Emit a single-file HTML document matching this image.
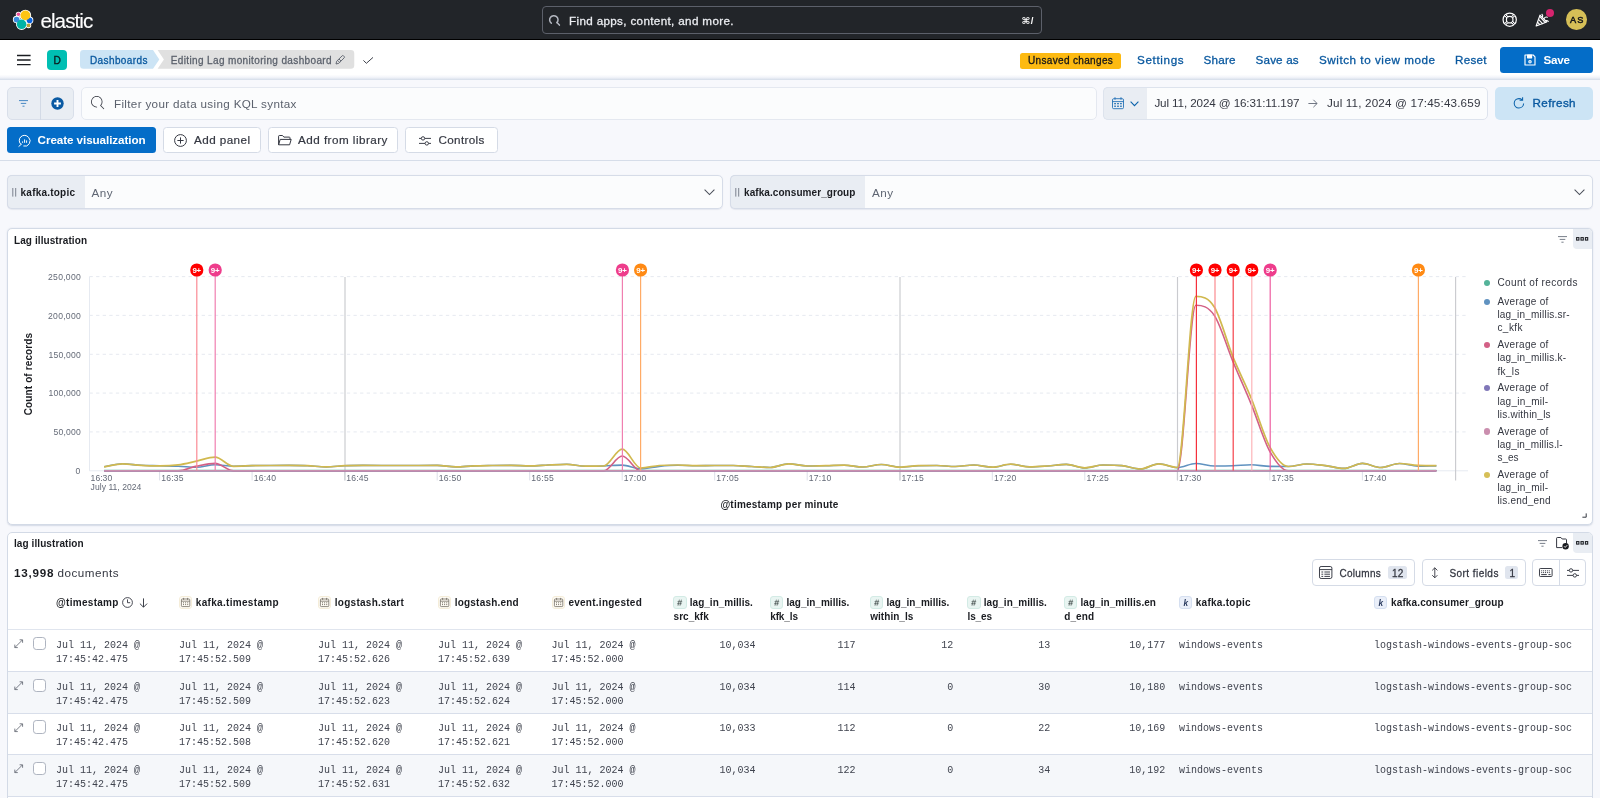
<!DOCTYPE html>
<html lang="en">
<head>
<meta charset="utf-8">
<title>Lag monitoring dashboard - Elastic</title>
<style>

html,body{margin:0;padding:0}
body{width:1600px;height:798px;overflow:hidden;position:relative;background:#f7f8fc;font-family:"Liberation Sans","DejaVu Sans",sans-serif;-webkit-font-smoothing:antialiased}
.t{position:absolute;white-space:nowrap;display:block}
#root{position:absolute;left:0;top:0;width:1600px;height:798px;overflow:hidden;will-change:transform}
.b{position:absolute;box-sizing:border-box}
svg{position:absolute;overflow:visible}

</style>
</head>
<body>
<div id="root">
<div class="b" style="left:0px;top:0px;width:1600px;height:39.9px;background:#000"></div>
<div class="b" style="left:0px;top:0px;width:1600px;height:38.9px;background:#222529"></div>
<svg style="left:0px;top:0px" width="40" height="40" viewBox="0 0 40 40" >
<g stroke="#fff" stroke-width="1.5" fill="#fff">
<circle cx="25.4" cy="15.4" r="5"/><circle cx="21.6" cy="24.3" r="4.9"/><circle cx="18.4" cy="14.3" r="1.9"/>
<circle cx="16.6" cy="19.6" r="3"/><circle cx="29.6" cy="20.3" r="3"/><circle cx="28.5" cy="25.4" r="2"/></g>
<circle cx="16.6" cy="19.6" r="2.9" fill="#3a8ddd"/>
<circle cx="29.6" cy="20.3" r="2.9" fill="#0b64dd"/>
<circle cx="28.5" cy="25.4" r="1.9" fill="#b9a23a"/>
<circle cx="18.4" cy="14.3" r="1.8" fill="#f04e98"/>
<circle cx="25.4" cy="15.4" r="4.9" fill="#fec514"/>
<circle cx="21.6" cy="24.3" r="4.8" fill="#00b3a7"/>
</svg>
<span class="t" style="left:40.4px;top:6.52px;font:400 20.6px/28.84px 'Liberation Sans','DejaVu Sans',sans-serif;color:#fff;letter-spacing:-0.913px;-webkit-text-stroke:0.12px #fff;">elastic</span>
<div class="b" style="left:541.6px;top:6.4px;width:500.2px;height:27.2px;border:1.2px solid #5c606a;border-radius:4px;background:#222529"></div>
<svg style="left:548px;top:13.6px" width="13" height="13" viewBox="0 0 13 13" ><g fill="none" stroke="#b4b8c1" stroke-width="1.5" stroke-linecap="round"><path d="M3.3 9.2A4.2 4.2 0 119 8.6"/><path d="M9 8.6l2.4 2.5"/></g></svg>
<span class="t" style="left:569px;top:12.83px;font:400 11.67px/16.34px 'Liberation Sans','DejaVu Sans',sans-serif;color:#eceef2;letter-spacing:0.344px;-webkit-text-stroke:0.26px #eceef2;">Find apps, content, and more.</span>
<span class="t" style="left:1021.5px;top:14.22px;font:700 9.5px/13.3px 'Liberation Sans','DejaVu Sans',sans-serif;color:#fff;letter-spacing:0.364px;">&#8984;/</span>
<svg style="left:1502.3px;top:12.2px" width="15.4" height="15.4" viewBox="0 0 16 16" ><g fill="none" stroke="#fff" stroke-width="1.25"><circle cx="8" cy="8" r="6.9"/><circle cx="8" cy="8" r="3.4"/>
<path d="M3.1 3.1l2.5 2.5M12.9 3.1l-2.5 2.5M3.1 12.9l2.5-2.5M12.9 12.9l-2.5-2.5" stroke-width="2.6"/></g>
<g fill="none" stroke="#20232a" stroke-width="0.9"><path d="M3.1 3.1l2.5 2.5M12.9 3.1l-2.5 2.5M3.1 12.9l2.5-2.5M12.9 12.9l-2.5-2.5"/></g></svg>
<svg style="left:1535.2px;top:12.2px" width="15.4" height="15.4" viewBox="0 0 16 16" ><g fill="none" stroke="#fff" stroke-width="1.2" stroke-linejoin="round" stroke-linecap="round">
<path d="M5.2 3.2L1.2 14.6l11-4.2z"/><path d="M3.6 7.6l4.2 4.4M2.6 10.6l2.2 2.4M4.8 4.6l5.4 6"/>
<path d="M7.2 2.4c.8.6 1 1.6.6 2.6M9.4 6.8c.8-1.4 2.2-1.8 3.4-1.4M11 9.2c1-.4 2-.2 2.8.6"/></g></svg>
<div class="b" style="left:1546.2px;top:9.4px;width:8.0px;height:8.0px;background:#d6246e;border-radius:50%"></div>
<div class="b" style="left:1566.3px;top:9.4px;width:20.7px;height:20.7px;background:#d6bf57;border-radius:50%"></div>
<span class="t" style="left:1570px;top:14.01px;font:400 9.2px/12.88px 'Liberation Sans','DejaVu Sans',sans-serif;color:#15161a;letter-spacing:1.134px;-webkit-text-stroke:0.5px #15161a;">AS</span>
<div class="b" style="left:0px;top:39.9px;width:1600px;height:39.7px;background:linear-gradient(#fff 0,#fff 34.6px,#f3f5fa 37.2px,#dfe5ef 39.1px,#d8dfea 39.7px)"></div>
<svg style="left:16.6px;top:54px" width="14" height="12" viewBox="0 0 14 12" ><path d="M0 1.4h13.6M0 6h13.6M0 10.6h13.6" stroke="#1a1c21" stroke-width="1.45" fill="none"/></svg>
<div class="b" style="left:47px;top:50px;width:19.6px;height:20px;background:#00bfb3;border-radius:4px"></div>
<span class="t" style="left:53.4px;top:53.57px;font:400 10.2px/14.28px 'Liberation Sans','DejaVu Sans',sans-serif;color:#0c1a1c;letter-spacing:0.000px;-webkit-text-stroke:0.30px #0c1a1c;">D</span>
<svg style="left:80px;top:50.4px" width="275" height="18.8" viewBox="0 0 275 18.8" ><path d="M3.5 0H73l6.3 9.4L73 18.8H3.5A3.5 3.5 0 010 15.3V3.5A3.5 3.5 0 013.5 0z" fill="#cce4f5"/>
<path d="M77.6 0H270.8a3.5 3.5 0 013.5 3.5V15.3a3.5 3.5 0 01-3.5 3.5H77.6l6.3-9.4z" fill="#e0e0e0"/></svg>
<span class="t" style="left:90px;top:53.6px;font:400 10px/14.0px 'Liberation Sans','DejaVu Sans',sans-serif;color:#09589f;letter-spacing:0.386px;-webkit-text-stroke:0.30px #09589f;">Dashboards</span>
<span class="t" style="left:170.8px;top:53.6px;font:400 10px/14.0px 'Liberation Sans','DejaVu Sans',sans-serif;color:#5a606b;letter-spacing:0.363px;-webkit-text-stroke:0.26px #5a606b;">Editing Lag monitoring dashboard</span>
<svg style="left:335px;top:55.2px" width="10" height="10" viewBox="0 0 10 10" ><g fill="none" stroke="#5a606b" stroke-width="0.9" stroke-linejoin="round"><path d="M1 9l.7-2.8L7.2.8a.9.9 0 011.3 0l.7.7a.9.9 0 010 1.3L3.8 8.3z"/><path d="M2.6 5.4l2 2M4 4l2 2"/></g></svg>
<svg style="left:363px;top:56.8px" width="11" height="7" viewBox="0 0 11 7" ><path d="M.4 3.4l3 2.9L10 .4" fill="none" stroke="#343741" stroke-width="0.95"/></svg>
<div class="b" style="left:1020px;top:52.8px;width:100.6px;height:16.1px;background:#fdba12;border-radius:2.5px"></div>
<span class="t" style="left:1028px;top:54.2px;font:400 10px/14.0px 'Liberation Sans','DejaVu Sans',sans-serif;color:#15161a;letter-spacing:0.338px;-webkit-text-stroke:0.30px #15161a;">Unsaved changes</span>
<span class="t" style="left:1137px;top:51.83px;font:400 11.67px/16.34px 'Liberation Sans','DejaVu Sans',sans-serif;color:#09589f;letter-spacing:0.639px;-webkit-text-stroke:0.30px #09589f;">Settings</span>
<span class="t" style="left:1203.4px;top:51.83px;font:400 11.67px/16.34px 'Liberation Sans','DejaVu Sans',sans-serif;color:#09589f;letter-spacing:0.273px;-webkit-text-stroke:0.30px #09589f;">Share</span>
<span class="t" style="left:1255.6px;top:51.83px;font:400 11.67px/16.34px 'Liberation Sans','DejaVu Sans',sans-serif;color:#09589f;letter-spacing:0.146px;-webkit-text-stroke:0.30px #09589f;">Save as</span>
<span class="t" style="left:1319px;top:51.83px;font:400 11.67px/16.34px 'Liberation Sans','DejaVu Sans',sans-serif;color:#09589f;letter-spacing:0.542px;-webkit-text-stroke:0.30px #09589f;">Switch to view mode</span>
<span class="t" style="left:1455px;top:51.83px;font:400 11.67px/16.34px 'Liberation Sans','DejaVu Sans',sans-serif;color:#09589f;letter-spacing:0.287px;-webkit-text-stroke:0.30px #09589f;">Reset</span>
<div class="b" style="left:1500px;top:46.9px;width:93.2px;height:26.0px;background:#046dc8;border-radius:3.5px"></div>
<svg style="left:1523.6px;top:54px" width="12" height="12" viewBox="0 0 12 12" ><g fill="none" stroke="#fff" stroke-width="1.15" stroke-linejoin="round"><path d="M1 1h8.2L11 2.8V11H1z"/><path d="M3.6 1v2.8h4V1z" fill="#fff"/><circle cx="6" cy="7.8" r="1.2"/></g></svg>
<span class="t" style="left:1543.4px;top:51.93px;font:700 11.67px/16.34px 'Liberation Sans','DejaVu Sans',sans-serif;color:#fff;letter-spacing:-0.211px;">Save</span>
<div class="b" style="left:7px;top:87px;width:66.6px;height:32.7px;background:#e9edf3;border:1px solid #d9dfea;border-radius:5px"></div>
<div class="b" style="left:39.8px;top:87px;width:1.0px;height:32.7px;background:#d3dae6"></div>
<svg style="left:18.6px;top:100px" width="9" height="7" viewBox="0 0 9 7" ><path d="M0 .6h9M1.8 3.4h5.4M3.5 6.2h2" stroke="#2b76bb" stroke-width="0.85" fill="none"/></svg>
<svg style="left:50.7px;top:96.5px" width="13" height="13" viewBox="0 0 13 13" ><circle cx="6.5" cy="6.5" r="6.2" fill="#0a5aa3"/><path d="M6.5 3.1v6.8M3.1 6.5h6.8" stroke="#fff" stroke-width="1.9" fill="none"/></svg>
<div class="b" style="left:81px;top:87px;width:1015.6px;height:32.7px;background:#fbfcfd;border:1px solid #e4e8f0;border-radius:5px"></div>
<svg style="left:90.6px;top:96.4px" width="13.2" height="13.2" viewBox="0 0 16 16" ><path fill="#343741" d="M11.271 11.978l3.872 3.873a.502.502 0 00.708 0 .502.502 0 000-.708l-3.565-3.564c2.38-2.747 2.267-6.923-.342-9.532-2.73-2.73-7.17-2.73-9.898 0-2.728 2.729-2.728 7.17 0 9.9a6.955 6.955 0 004.949 2.05.5.5 0 000-1 5.96 5.96 0 01-4.242-1.757 6.01 6.01 0 010-8.486 6.004 6.004 0 018.484 0 6.01 6.01 0 010 8.486.5.5 0 00.034.738z"/></svg>
<span class="t" style="left:114px;top:96.13px;font:400 11.67px/16.34px 'Liberation Sans','DejaVu Sans',sans-serif;color:#5b616d;letter-spacing:0.328px;">Filter your data using KQL syntax</span>
<div class="b" style="left:1103px;top:87px;width:385px;height:32.7px;background:#fbfcfd;border:1px solid #dde3ed;border-radius:5px"></div>
<div class="b" style="left:1103px;top:87px;width:44.4px;height:32.7px;background:#e9edf3;border:1px solid #dde3ed;border-right:none;border-radius:5px 0 0 5px"></div>
<svg style="left:1111.6px;top:96.6px" width="12" height="12.4" viewBox="0 0 12 12.4" ><g fill="none" stroke="#1a6bb3" stroke-width="0.85"><rect x=".5" y="1.7" width="11" height="10" rx="1.2"/><path d="M.5 4.6h11M3 .2v2.6M9 .2v2.6"/></g>
<g fill="#0a62ab"><rect x="2.3" y="6" width="1.5" height="1.3"/><rect x="5.25" y="6" width="1.5" height="1.3"/><rect x="8.2" y="6" width="1.5" height="1.3"/><rect x="2.3" y="8.6" width="1.5" height="1.3"/><rect x="5.25" y="8.6" width="1.5" height="1.3"/><rect x="8.2" y="8.6" width="1.5" height="1.3"/></g></svg>
<svg style="left:1130px;top:100.6px" width="9" height="5.5" viewBox="0 0 9 5.5" ><path d="M.6.7l3.9 3.9L8.4.7" fill="none" stroke="#0a62ab" stroke-width="1.1"/></svg>
<span class="t" style="left:1154.4px;top:95.33px;font:400 11.67px/16.34px 'Liberation Sans','DejaVu Sans',sans-serif;color:#343741;letter-spacing:-0.114px;">Jul 11, 2024 @ 16:31:11.197</span>
<svg style="left:1308.4px;top:98.8px" width="10" height="9" viewBox="0 0 10 9" ><path d="M.4 4.5h8.6M5.4.8l3.7 3.7-3.7 3.7" fill="none" stroke="#69707d" stroke-width="0.95"/></svg>
<span class="t" style="left:1327px;top:95.33px;font:400 11.67px/16.34px 'Liberation Sans','DejaVu Sans',sans-serif;color:#343741;letter-spacing:0.169px;">Jul 11, 2024 @ 17:45:43.659</span>
<div class="b" style="left:1495px;top:87px;width:98.2px;height:32.7px;background:#cce4f5;border-radius:5px"></div>
<svg style="left:1513.4px;top:97.4px" width="12" height="12" viewBox="0 0 12 12" ><g fill="none" stroke="#0a62ab" stroke-width="1.05"><path d="M10.6 6.4A4.7 4.7 0 115.9 1.6c1.3 0 2.4.5 3.3 1.3"/><path d="M9.6.2v3h-3"/></g></svg>
<span class="t" style="left:1532.6px;top:95.33px;font:400 11.67px/16.34px 'Liberation Sans','DejaVu Sans',sans-serif;color:#09589f;letter-spacing:0.362px;-webkit-text-stroke:0.36px #09589f;">Refresh</span>
<div class="b" style="left:7.4px;top:127.4px;width:148.4px;height:25.4px;background:#046dc8;border-radius:3.5px"></div>
<svg style="left:17.6px;top:133.6px" width="14" height="14" viewBox="0 0 14 14" ><g fill="none" stroke="#fff" stroke-width="1"><path d="M3.2 10.6A5.2 5.2 0 1110.6 3.4a5.2 5.2 0 01-5.2 8.6"/><path d="M.6 12.6l3-2.6"/><path d="M4.6 7.4v1.4M6.6 5.4v3.4M8.6 6.4v2.4"/></g></svg>
<span class="t" style="left:37.6px;top:131.93px;font:700 11.67px/16.34px 'Liberation Sans','DejaVu Sans',sans-serif;color:#fff;letter-spacing:-0.078px;">Create visualization</span>
<div class="b" style="left:163.4px;top:127.4px;width:97.4px;height:25.4px;background:#fff;border:1px solid #d5dbe6;border-radius:3.5px"></div>
<svg style="left:173.8px;top:133.9px" width="13" height="13" viewBox="0 0 13 13" ><g fill="none" stroke="#343741" stroke-width="1"><circle cx="6.5" cy="6.5" r="5.9"/><path d="M6.5 3.4v6.2M3.4 6.5h6.2"/></g></svg>
<span class="t" style="left:194px;top:131.93px;font:400 11.67px/16.34px 'Liberation Sans','DejaVu Sans',sans-serif;color:#343741;letter-spacing:0.438px;-webkit-text-stroke:0.20px #343741;">Add panel</span>
<div class="b" style="left:267.6px;top:127.4px;width:130.8px;height:25.4px;background:#fff;border:1px solid #d5dbe6;border-radius:3.5px"></div>
<svg style="left:277.6px;top:134.9px" width="14" height="11" viewBox="0 0 14 11" ><g fill="none" stroke="#343741" stroke-width="1" stroke-linejoin="round"><path d="M.6 9.8V1.2c0-.4.3-.7.7-.7h3.2l1.4 1.6h5.4c.4 0 .7.3.7.7v1.6"/><path d="M.6 9.8l1.6-5.4h11l-1.6 5.4z"/></g></svg>
<span class="t" style="left:298px;top:131.93px;font:400 11.67px/16.34px 'Liberation Sans','DejaVu Sans',sans-serif;color:#343741;letter-spacing:0.476px;-webkit-text-stroke:0.20px #343741;">Add from library</span>
<div class="b" style="left:405.4px;top:127.4px;width:92.6px;height:25.4px;background:#fff;border:1px solid #d5dbe6;border-radius:3.5px"></div>
<svg style="left:419px;top:135.5px" width="12" height="10" viewBox="0 0 12 10" ><g fill="none" stroke="#343741" stroke-width="0.95"><path d="M0 2.4h2.2M5.8 2.4H12M0 7.4h6M9.6 7.4H12"/><circle cx="4" cy="2.4" r="1.7"/><circle cx="7.8" cy="7.4" r="1.7"/></g></svg>
<span class="t" style="left:438.4px;top:131.93px;font:400 11.67px/16.34px 'Liberation Sans','DejaVu Sans',sans-serif;color:#343741;letter-spacing:0.371px;-webkit-text-stroke:0.20px #343741;">Controls</span>
<div class="b" style="left:0px;top:160px;width:1600px;height:1px;background:#d6dde9"></div>
<div class="b" style="left:7px;top:175px;width:716.2px;height:33.5px;background:#fbfcfd;border:1px solid #d6dce8;border-radius:5px;box-shadow:0 0.6px 1px rgba(160,172,196,0.2)"></div>
<div class="b" style="left:7px;top:175px;width:78px;height:33.5px;background:#e9edf3;border:1px solid #d6dce8;border-right:none;border-radius:5px 0 0 5px"></div>
<svg style="left:11.9px;top:188.2px" width="5" height="8.6" viewBox="0 0 5 8.6" ><path d="M.8 0v8.6M3.7 0v8.6" stroke="#5f6673" stroke-width="0.8"/></svg>
<span class="t" style="left:20.6px;top:186.2px;font:700 10px/14.0px 'Liberation Sans','DejaVu Sans',sans-serif;color:#1a1c21;letter-spacing:0.215px;">kafka.topic</span>
<span class="t" style="left:91.6px;top:185.13px;font:400 11.67px/16.34px 'Liberation Sans','DejaVu Sans',sans-serif;color:#5f6673;letter-spacing:0.453px;">Any</span>
<svg style="left:703.8000000000001px;top:189px" width="11" height="6.5" viewBox="0 0 11 6.5" ><path d="M.6.7l4.9 4.9L10.4.7" fill="none" stroke="#4a4f5b" stroke-width="1.05"/></svg>
<div class="b" style="left:730px;top:175px;width:863.2px;height:33.5px;background:#fbfcfd;border:1px solid #d6dce8;border-radius:5px;box-shadow:0 0.6px 1px rgba(160,172,196,0.2)"></div>
<div class="b" style="left:730px;top:175px;width:134.6px;height:33.5px;background:#e9edf3;border:1px solid #d6dce8;border-right:none;border-radius:5px 0 0 5px"></div>
<svg style="left:734.9px;top:188.2px" width="5" height="8.6" viewBox="0 0 5 8.6" ><path d="M.8 0v8.6M3.7 0v8.6" stroke="#5f6673" stroke-width="0.8"/></svg>
<span class="t" style="left:744px;top:186.2px;font:700 10px/14.0px 'Liberation Sans','DejaVu Sans',sans-serif;color:#1a1c21;letter-spacing:0.071px;">kafka.consumer_group</span>
<span class="t" style="left:872px;top:185.13px;font:400 11.67px/16.34px 'Liberation Sans','DejaVu Sans',sans-serif;color:#5f6673;letter-spacing:0.453px;">Any</span>
<svg style="left:1573.8px;top:189px" width="11" height="6.5" viewBox="0 0 11 6.5" ><path d="M.6.7l4.9 4.9L10.4.7" fill="none" stroke="#4a4f5b" stroke-width="1.05"/></svg>
<div class="b" style="left:7px;top:228.2px;width:1586.2px;height:296.4px;background:#fff;border:1px solid #d3dae6;border-radius:5px;box-shadow:0 0.8px 1.5px rgba(160,172,196,0.4)"></div>
<span class="t" style="left:14px;top:233.6px;font:700 10px/14.0px 'Liberation Sans','DejaVu Sans',sans-serif;color:#1a1c21;letter-spacing:0.089px;">Lag illustration</span>
<div class="b" style="left:1572.6px;top:229.2px;width:19.6px;height:20.0px;background:#e9edf3;border-radius:0 4px 0 4px"></div>
<svg style="left:1576.2px;top:237.4px" width="13" height="4" viewBox="0 0 13 4" ><g fill="none" stroke="#1a1c21" stroke-width="1.05"><rect x=".6" y=".6" width="2.3" height="2.5"/><rect x="5" y=".6" width="2.3" height="2.5"/><rect x="9.4" y=".6" width="2.3" height="2.5"/></g></svg>
<svg style="left:1557.8px;top:236.4px" width="9" height="7" viewBox="0 0 9 7" ><path d="M0 .6h9M1.7 3.4h5.6M3.4 6.2h2.2" stroke="#69707d" stroke-width="0.9" fill="none"/></svg>
<svg style="left:1581.6px;top:513.4px" width="5" height="5" viewBox="0 0 5 5" ><path d="M4.2.4v3.8H.4" fill="none" stroke="#343741" stroke-width="1"/></svg>
<svg style="left:0;top:0" width="1600" height="530" viewBox="0 0 1600 530"><path d="M89.5 431.9H1468" stroke="#e3e7ee" stroke-width="0.9" stroke-dasharray="3.3 3.3" fill="none"/><path d="M89.5 393.1H1468" stroke="#e3e7ee" stroke-width="0.9" stroke-dasharray="3.3 3.3" fill="none"/><path d="M89.5 354.3H1468" stroke="#e3e7ee" stroke-width="0.9" stroke-dasharray="3.3 3.3" fill="none"/><path d="M89.5 315.4H1468" stroke="#e3e7ee" stroke-width="0.9" stroke-dasharray="3.3 3.3" fill="none"/><path d="M89.5 276.6H1468" stroke="#e3e7ee" stroke-width="0.9" stroke-dasharray="3.3 3.3" fill="none"/><path d="M89.5 276.5V470.8H1468" stroke="#e6eaf1" stroke-width="1" fill="none"/><path d="M159.6 471V480.4" stroke="#d8dde6" stroke-width="0.9"/><path d="M252.1 471V480.4" stroke="#d8dde6" stroke-width="0.9"/><path d="M344.6 471V480.4" stroke="#d8dde6" stroke-width="0.9"/><path d="M437.2 471V480.4" stroke="#d8dde6" stroke-width="0.9"/><path d="M529.7 471V480.4" stroke="#d8dde6" stroke-width="0.9"/><path d="M622.2 471V480.4" stroke="#d8dde6" stroke-width="0.9"/><path d="M714.7 471V480.4" stroke="#d8dde6" stroke-width="0.9"/><path d="M807.2 471V480.4" stroke="#d8dde6" stroke-width="0.9"/><path d="M899.8 471V480.4" stroke="#d8dde6" stroke-width="0.9"/><path d="M992.3 471V480.4" stroke="#d8dde6" stroke-width="0.9"/><path d="M1084.8 471V480.4" stroke="#d8dde6" stroke-width="0.9"/><path d="M1177.3 471V480.4" stroke="#d8dde6" stroke-width="0.9"/><path d="M1269.8 471V480.4" stroke="#d8dde6" stroke-width="0.9"/><path d="M1362.4 471V480.4" stroke="#d8dde6" stroke-width="0.9"/><path d="M345 277V480.4" stroke="#cacbcf" stroke-width="1.15"/><path d="M900 277V480.4" stroke="#cacbcf" stroke-width="1.15"/><path d="M1177.5 277V480.4" stroke="#cacbcf" stroke-width="1.15"/><path d="M1455.6 277V480.4" stroke="#cacbcf" stroke-width="1.15"/><path d="M104.1 470.6C110.3 470.6 116.4 470.6 122.6 470.6C128.8 470.6 134.9 470.6 141.1 470.6C147.3 470.6 153.4 470.6 159.6 470.6C165.8 470.6 171.9 470.6 178.1 470.6C184.3 470.6 190.4 470.6 196.6 470.6C202.8 470.6 208.9 470.6 215.1 470.6C221.3 470.6 227.4 470.6 233.6 470.6C239.8 470.6 246.0 470.6 252.1 470.6C258.3 470.6 264.5 470.6 270.6 470.6C276.8 470.6 283.0 470.6 289.1 470.6C295.3 470.6 301.5 470.6 307.6 470.6C313.8 470.6 320.0 470.6 326.1 470.6C332.3 470.6 338.5 470.6 344.6 470.6C350.8 470.6 357.0 470.6 363.1 470.6C369.3 470.6 375.5 470.6 381.6 470.6C387.8 470.6 394.0 470.6 400.2 470.6C406.3 470.6 412.5 470.6 418.7 470.6C424.8 470.6 431.0 470.6 437.2 470.6C443.3 470.6 449.5 470.6 455.7 470.6C461.8 470.6 468.0 470.6 474.2 470.6C480.3 470.6 486.5 470.6 492.7 470.6C498.8 470.6 505.0 470.6 511.2 470.6C517.3 470.6 523.5 470.6 529.7 470.6C535.8 470.6 542.0 470.6 548.2 470.6C554.4 470.6 560.5 470.6 566.7 470.6C572.9 470.6 579.0 470.6 585.2 470.6C591.4 470.6 597.5 470.6 603.7 470.6C609.9 470.6 616.0 470.6 622.2 470.6C628.4 470.6 634.5 470.6 640.7 470.6C646.9 470.6 653.0 470.6 659.2 470.6C665.4 470.6 671.5 470.6 677.7 470.6C683.9 470.6 690.0 470.6 696.2 470.6C702.4 470.6 708.6 470.6 714.7 470.6C720.9 470.6 727.1 470.6 733.2 470.6C739.4 470.6 745.6 470.6 751.7 470.6C757.9 470.6 764.1 470.6 770.2 470.6C776.4 470.6 782.6 470.6 788.7 470.6C794.9 470.6 801.1 470.6 807.2 470.6C813.4 470.6 819.6 470.6 825.7 470.6C831.9 470.6 838.1 470.6 844.2 470.6C850.4 470.6 856.6 470.6 862.8 470.6C868.9 470.6 875.1 470.6 881.3 470.6C887.4 470.6 893.6 470.6 899.8 470.6C905.9 470.6 912.1 470.6 918.3 470.6C924.4 470.6 930.6 470.6 936.8 470.6C942.9 470.6 949.1 470.6 955.3 470.6C961.4 470.6 967.6 470.6 973.8 470.6C979.9 470.6 986.1 470.6 992.3 470.6C998.4 470.6 1004.6 470.6 1010.8 470.6C1017.0 470.6 1023.1 470.6 1029.3 470.6C1035.5 470.6 1041.6 470.6 1047.8 470.6C1054.0 470.6 1060.1 470.6 1066.3 470.6C1072.5 470.6 1078.6 470.6 1084.8 470.6C1091.0 470.6 1097.1 470.6 1103.3 470.6C1109.5 470.6 1115.6 470.6 1121.8 470.6C1128.0 470.6 1134.1 470.6 1140.3 470.6C1146.5 470.6 1152.6 470.6 1158.8 470.6C1165.0 470.6 1171.2 470.6 1177.3 470.6C1183.5 470.6 1189.7 470.6 1195.8 470.6C1202.0 470.6 1208.2 470.6 1214.3 470.6C1220.5 470.6 1226.7 470.6 1232.8 470.6C1239.0 470.6 1245.2 470.6 1251.3 470.6C1257.5 470.6 1263.7 470.6 1269.8 470.6C1276.0 470.6 1282.2 470.6 1288.3 470.6C1294.5 470.6 1300.7 470.6 1306.8 470.6C1313.0 470.6 1319.2 470.6 1325.4 470.6C1331.5 470.6 1337.7 470.6 1343.9 470.6C1350.0 470.6 1356.2 470.6 1362.4 470.6C1368.5 470.6 1374.7 470.6 1380.9 470.6C1387.0 470.6 1393.2 470.6 1399.4 470.6C1405.5 470.6 1411.7 470.6 1417.9 470.6C1424.0 470.6 1430.2 470.6 1436.4 470.6" fill="none" stroke="#54b399" stroke-width="1.6" stroke-linejoin="round"/><path d="M104.1 466.8C110.3 465.8 116.4 463.8 122.6 463.8C128.8 463.8 134.9 465.0 141.1 465.3C147.3 465.7 153.4 465.6 159.6 465.8C165.8 465.9 171.9 465.9 178.1 466.2C184.3 466.4 190.4 467.3 196.6 467.3C202.8 467.3 208.9 464.8 215.1 464.8C221.3 464.8 227.4 466.3 233.6 466.3C239.8 466.3 246.0 465.8 252.1 465.6C258.3 465.5 264.5 465.5 270.6 465.5C276.8 465.4 283.0 465.4 289.1 465.4C295.3 465.4 301.5 465.4 307.6 465.7C313.8 466.0 320.0 466.9 326.1 466.9C332.3 466.9 338.5 466.0 344.6 465.7C350.8 465.4 357.0 465.4 363.1 465.4C369.3 465.4 375.5 465.4 381.6 465.5C387.8 465.5 394.0 465.5 400.2 465.5C406.3 465.5 412.5 465.5 418.7 465.5C424.8 465.4 431.0 465.4 437.2 465.4C443.3 465.4 449.5 466.9 455.7 466.9C461.8 466.9 468.0 466.1 474.2 465.9C480.3 465.6 486.5 465.6 492.7 465.5C498.8 465.5 505.0 465.4 511.2 465.4C517.3 465.4 523.5 465.9 529.7 465.9C535.8 465.9 542.0 465.3 548.2 465.0C554.4 464.7 560.5 464.3 566.7 464.3C572.9 464.3 579.0 466.2 585.2 466.2C591.4 466.2 597.5 466.2 603.7 466.0C609.9 465.8 616.0 465.1 622.2 465.1C628.4 465.1 634.5 468.7 640.7 468.7C646.9 468.7 653.0 467.0 659.2 466.4C665.4 465.8 671.5 465.3 677.7 465.3C683.9 465.3 690.0 465.7 696.2 465.7C702.4 465.7 708.6 465.5 714.7 465.5C720.9 465.5 727.1 465.5 733.2 465.5C739.4 465.6 745.6 466.2 751.7 466.5C757.9 466.8 764.1 467.5 770.2 467.5C776.4 467.5 782.6 463.8 788.7 463.8C794.9 463.8 801.1 466.0 807.2 466.0C813.4 466.0 819.6 465.8 825.7 465.7C831.9 465.6 838.1 465.2 844.2 465.2C850.4 465.2 856.6 467.0 862.8 467.0C868.9 467.0 875.1 464.5 881.3 464.5C887.4 464.5 893.6 467.2 899.8 467.2C905.9 467.2 912.1 465.9 918.3 465.7C924.4 465.5 930.6 465.5 936.8 465.5C942.9 465.5 949.1 466.5 955.3 466.5C961.4 466.5 967.6 465.0 973.8 465.0C979.9 465.0 986.1 467.2 992.3 467.2C998.4 467.2 1004.6 464.2 1010.8 464.2C1017.0 464.2 1023.1 466.9 1029.3 466.9C1035.5 466.9 1041.6 466.4 1047.8 466.0C1054.0 465.6 1060.1 464.4 1066.3 464.4C1072.5 464.4 1078.6 467.9 1084.8 467.9C1091.0 467.9 1097.1 465.0 1103.3 465.0C1109.5 465.0 1115.6 465.0 1121.8 465.6C1128.0 466.2 1134.1 469.0 1140.3 469.0C1146.5 469.0 1152.6 463.8 1158.8 463.8C1165.0 463.8 1171.2 467.6 1177.3 467.6C1183.5 467.6 1189.7 463.5 1195.8 463.5C1202.0 463.5 1208.2 466.0 1214.3 466.0C1220.5 466.0 1226.7 466.0 1232.8 465.8C1239.0 465.6 1245.2 464.8 1251.3 464.8C1257.5 464.8 1263.7 466.3 1269.8 466.4C1276.0 466.5 1282.2 466.5 1288.3 466.5C1294.5 466.5 1300.7 464.0 1306.8 464.0C1313.0 464.0 1319.2 464.9 1325.4 465.6C1331.5 466.3 1337.7 468.4 1343.9 468.4C1350.0 468.4 1356.2 463.4 1362.4 463.4C1368.5 463.4 1374.7 467.5 1380.9 467.5C1387.0 467.5 1393.2 463.5 1399.4 463.5C1405.5 463.5 1411.7 466.2 1417.9 466.2C1424.0 466.2 1430.2 466.0 1436.4 465.9" fill="none" stroke="#6092c0" stroke-width="1.6" stroke-linejoin="round"/><path d="M104.1 470.8C110.3 470.8 116.4 470.8 122.6 470.8C128.8 470.8 134.9 470.8 141.1 470.8C147.3 470.8 153.4 470.8 159.6 470.8C165.8 470.8 171.9 470.8 178.1 470.8C184.3 470.8 190.4 467.3 196.6 466.1C202.8 464.9 208.9 463.4 215.1 463.4C221.3 463.4 227.4 470.8 233.6 470.8C239.8 470.8 246.0 470.8 252.1 470.8C258.3 470.8 264.5 470.8 270.6 470.8C276.8 470.8 283.0 470.8 289.1 470.8C295.3 470.8 301.5 470.8 307.6 470.8C313.8 470.8 320.0 470.8 326.1 470.8C332.3 470.8 338.5 470.8 344.6 470.8C350.8 470.8 357.0 470.8 363.1 470.8C369.3 470.8 375.5 470.8 381.6 470.8C387.8 470.8 394.0 470.8 400.2 470.8C406.3 470.8 412.5 470.8 418.7 470.8C424.8 470.8 431.0 470.8 437.2 470.8C443.3 470.8 449.5 470.8 455.7 470.8C461.8 470.8 468.0 470.8 474.2 470.8C480.3 470.8 486.5 470.8 492.7 470.8C498.8 470.8 505.0 470.8 511.2 470.8C517.3 470.8 523.5 470.8 529.7 470.8C535.8 470.8 542.0 470.8 548.2 470.8C554.4 470.8 560.5 470.8 566.7 470.8C572.9 470.8 579.0 470.8 585.2 470.8C591.4 470.8 597.5 470.8 603.7 470.8C609.9 470.8 616.0 456.0 622.2 456.0C628.4 456.0 634.5 470.8 640.7 470.8C646.9 470.8 653.0 470.8 659.2 470.8C665.4 470.8 671.5 470.8 677.7 470.8C683.9 470.8 690.0 470.8 696.2 470.8C702.4 470.8 708.6 470.8 714.7 470.8C720.9 470.8 727.1 470.8 733.2 470.8C739.4 470.8 745.6 470.8 751.7 470.8C757.9 470.8 764.1 470.8 770.2 470.8C776.4 470.8 782.6 470.8 788.7 470.8C794.9 470.8 801.1 470.8 807.2 470.8C813.4 470.8 819.6 470.8 825.7 470.8C831.9 470.8 838.1 470.8 844.2 470.8C850.4 470.8 856.6 470.8 862.8 470.8C868.9 470.8 875.1 470.8 881.3 470.8C887.4 470.8 893.6 470.8 899.8 470.8C905.9 470.8 912.1 470.8 918.3 470.8C924.4 470.8 930.6 470.8 936.8 470.8C942.9 470.8 949.1 470.8 955.3 470.8C961.4 470.8 967.6 470.8 973.8 470.8C979.9 470.8 986.1 470.8 992.3 470.8C998.4 470.8 1004.6 470.8 1010.8 470.8C1017.0 470.8 1023.1 470.8 1029.3 470.8C1035.5 470.8 1041.6 470.8 1047.8 470.8C1054.0 470.8 1060.1 470.8 1066.3 470.8C1072.5 470.8 1078.6 470.8 1084.8 470.8C1091.0 470.8 1097.1 470.8 1103.3 470.8C1109.5 470.8 1115.6 470.8 1121.8 470.8C1128.0 470.8 1134.1 470.8 1140.3 470.8C1146.5 470.8 1152.6 470.8 1158.8 470.8C1165.0 470.8 1171.2 470.8 1177.3 470.8C1183.5 470.8 1189.7 305.3 1195.8 305.3C1202.0 305.3 1208.2 306.1 1214.3 315.4C1220.5 324.7 1226.7 346.4 1232.8 361.2C1239.0 376.1 1245.2 389.3 1251.3 404.4C1257.5 419.4 1263.7 440.3 1269.8 451.3C1276.0 462.4 1282.2 470.8 1288.3 470.8C1294.5 470.8 1300.7 470.8 1306.8 470.8C1313.0 470.8 1319.2 470.8 1325.4 470.8C1331.5 470.8 1337.7 470.8 1343.9 470.8C1350.0 470.8 1356.2 470.8 1362.4 470.8C1368.5 470.8 1374.7 470.8 1380.9 470.8C1387.0 470.8 1393.2 470.8 1399.4 470.8C1405.5 470.8 1411.7 470.8 1417.9 470.8C1424.0 470.8 1430.2 470.8 1436.4 470.8" fill="none" stroke="#d36086" stroke-width="1.6" stroke-linejoin="round"/><path d="M104.1 470.7C110.3 470.7 116.4 470.7 122.6 470.7C128.8 470.7 134.9 470.7 141.1 470.7C147.3 470.7 153.4 470.7 159.6 470.7C165.8 470.7 171.9 470.7 178.1 470.7C184.3 470.7 190.4 470.7 196.6 470.7C202.8 470.7 208.9 470.7 215.1 470.7C221.3 470.7 227.4 470.7 233.6 470.7C239.8 470.7 246.0 470.7 252.1 470.7C258.3 470.7 264.5 470.7 270.6 470.7C276.8 470.7 283.0 470.7 289.1 470.7C295.3 470.7 301.5 470.7 307.6 470.7C313.8 470.7 320.0 470.7 326.1 470.7C332.3 470.7 338.5 470.7 344.6 470.7C350.8 470.7 357.0 470.7 363.1 470.7C369.3 470.7 375.5 470.7 381.6 470.7C387.8 470.7 394.0 470.7 400.2 470.7C406.3 470.7 412.5 470.7 418.7 470.7C424.8 470.7 431.0 470.7 437.2 470.7C443.3 470.7 449.5 470.7 455.7 470.7C461.8 470.7 468.0 470.7 474.2 470.7C480.3 470.7 486.5 470.7 492.7 470.7C498.8 470.7 505.0 470.7 511.2 470.7C517.3 470.7 523.5 470.7 529.7 470.7C535.8 470.7 542.0 470.7 548.2 470.7C554.4 470.7 560.5 470.7 566.7 470.7C572.9 470.7 579.0 470.7 585.2 470.7C591.4 470.7 597.5 470.7 603.7 470.7C609.9 470.7 616.0 470.7 622.2 470.7C628.4 470.7 634.5 470.7 640.7 470.7C646.9 470.7 653.0 470.7 659.2 470.7C665.4 470.7 671.5 470.7 677.7 470.7C683.9 470.7 690.0 470.7 696.2 470.7C702.4 470.7 708.6 470.7 714.7 470.7C720.9 470.7 727.1 470.7 733.2 470.7C739.4 470.7 745.6 470.7 751.7 470.7C757.9 470.7 764.1 470.7 770.2 470.7C776.4 470.7 782.6 470.7 788.7 470.7C794.9 470.7 801.1 470.7 807.2 470.7C813.4 470.7 819.6 470.7 825.7 470.7C831.9 470.7 838.1 470.7 844.2 470.7C850.4 470.7 856.6 470.7 862.8 470.7C868.9 470.7 875.1 470.7 881.3 470.7C887.4 470.7 893.6 470.7 899.8 470.7C905.9 470.7 912.1 470.7 918.3 470.7C924.4 470.7 930.6 470.7 936.8 470.7C942.9 470.7 949.1 470.7 955.3 470.7C961.4 470.7 967.6 470.7 973.8 470.7C979.9 470.7 986.1 470.7 992.3 470.7C998.4 470.7 1004.6 470.7 1010.8 470.7C1017.0 470.7 1023.1 470.7 1029.3 470.7C1035.5 470.7 1041.6 470.7 1047.8 470.7C1054.0 470.7 1060.1 470.7 1066.3 470.7C1072.5 470.7 1078.6 470.7 1084.8 470.7C1091.0 470.7 1097.1 470.7 1103.3 470.7C1109.5 470.7 1115.6 470.7 1121.8 470.7C1128.0 470.7 1134.1 470.7 1140.3 470.7C1146.5 470.7 1152.6 470.7 1158.8 470.7C1165.0 470.7 1171.2 470.7 1177.3 470.7C1183.5 470.7 1189.7 470.7 1195.8 470.7C1202.0 470.7 1208.2 470.7 1214.3 470.7C1220.5 470.7 1226.7 470.7 1232.8 470.7C1239.0 470.7 1245.2 470.7 1251.3 470.7C1257.5 470.7 1263.7 470.7 1269.8 470.7C1276.0 470.7 1282.2 470.7 1288.3 470.7C1294.5 470.7 1300.7 470.7 1306.8 470.7C1313.0 470.7 1319.2 470.7 1325.4 470.7C1331.5 470.7 1337.7 470.7 1343.9 470.7C1350.0 470.7 1356.2 470.7 1362.4 470.7C1368.5 470.7 1374.7 470.7 1380.9 470.7C1387.0 470.7 1393.2 470.7 1399.4 470.7C1405.5 470.7 1411.7 470.7 1417.9 470.7C1424.0 470.7 1430.2 470.7 1436.4 470.7" fill="none" stroke="#8077b8" stroke-width="1.6" stroke-linejoin="round"/><path d="M104.1 470.7C110.3 470.7 116.4 470.7 122.6 470.7C128.8 470.7 134.9 470.7 141.1 470.7C147.3 470.7 153.4 470.7 159.6 470.7C165.8 470.7 171.9 470.7 178.1 470.7C184.3 470.7 190.4 470.7 196.6 470.7C202.8 470.7 208.9 470.7 215.1 470.7C221.3 470.7 227.4 470.7 233.6 470.7C239.8 470.7 246.0 470.7 252.1 470.7C258.3 470.7 264.5 470.7 270.6 470.7C276.8 470.7 283.0 470.7 289.1 470.7C295.3 470.7 301.5 470.7 307.6 470.7C313.8 470.7 320.0 470.7 326.1 470.7C332.3 470.7 338.5 470.7 344.6 470.7C350.8 470.7 357.0 470.7 363.1 470.7C369.3 470.7 375.5 470.7 381.6 470.7C387.8 470.7 394.0 470.7 400.2 470.7C406.3 470.7 412.5 470.7 418.7 470.7C424.8 470.7 431.0 470.7 437.2 470.7C443.3 470.7 449.5 470.7 455.7 470.7C461.8 470.7 468.0 470.7 474.2 470.7C480.3 470.7 486.5 470.7 492.7 470.7C498.8 470.7 505.0 470.7 511.2 470.7C517.3 470.7 523.5 470.7 529.7 470.7C535.8 470.7 542.0 470.7 548.2 470.7C554.4 470.7 560.5 470.7 566.7 470.7C572.9 470.7 579.0 470.7 585.2 470.7C591.4 470.7 597.5 470.7 603.7 470.7C609.9 470.7 616.0 470.7 622.2 470.7C628.4 470.7 634.5 470.7 640.7 470.7C646.9 470.7 653.0 470.7 659.2 470.7C665.4 470.7 671.5 470.7 677.7 470.7C683.9 470.7 690.0 470.7 696.2 470.7C702.4 470.7 708.6 470.7 714.7 470.7C720.9 470.7 727.1 470.7 733.2 470.7C739.4 470.7 745.6 470.7 751.7 470.7C757.9 470.7 764.1 470.7 770.2 470.7C776.4 470.7 782.6 470.7 788.7 470.7C794.9 470.7 801.1 470.7 807.2 470.7C813.4 470.7 819.6 470.7 825.7 470.7C831.9 470.7 838.1 470.7 844.2 470.7C850.4 470.7 856.6 470.7 862.8 470.7C868.9 470.7 875.1 470.7 881.3 470.7C887.4 470.7 893.6 470.7 899.8 470.7C905.9 470.7 912.1 470.7 918.3 470.7C924.4 470.7 930.6 470.7 936.8 470.7C942.9 470.7 949.1 470.7 955.3 470.7C961.4 470.7 967.6 470.7 973.8 470.7C979.9 470.7 986.1 470.7 992.3 470.7C998.4 470.7 1004.6 470.7 1010.8 470.7C1017.0 470.7 1023.1 470.7 1029.3 470.7C1035.5 470.7 1041.6 470.7 1047.8 470.7C1054.0 470.7 1060.1 470.7 1066.3 470.7C1072.5 470.7 1078.6 470.7 1084.8 470.7C1091.0 470.7 1097.1 470.7 1103.3 470.7C1109.5 470.7 1115.6 470.7 1121.8 470.7C1128.0 470.7 1134.1 470.7 1140.3 470.7C1146.5 470.7 1152.6 470.7 1158.8 470.7C1165.0 470.7 1171.2 470.7 1177.3 470.7C1183.5 470.7 1189.7 470.7 1195.8 470.7C1202.0 470.7 1208.2 470.7 1214.3 470.7C1220.5 470.7 1226.7 470.7 1232.8 470.7C1239.0 470.7 1245.2 470.7 1251.3 470.7C1257.5 470.7 1263.7 470.7 1269.8 470.7C1276.0 470.7 1282.2 470.7 1288.3 470.7C1294.5 470.7 1300.7 470.7 1306.8 470.7C1313.0 470.7 1319.2 470.7 1325.4 470.7C1331.5 470.7 1337.7 470.7 1343.9 470.7C1350.0 470.7 1356.2 470.7 1362.4 470.7C1368.5 470.7 1374.7 470.7 1380.9 470.7C1387.0 470.7 1393.2 470.7 1399.4 470.7C1405.5 470.7 1411.7 470.7 1417.9 470.7C1424.0 470.7 1430.2 470.7 1436.4 470.7" fill="none" stroke="#ca8eae" stroke-width="1.6" stroke-linejoin="round"/><path d="M104.1 466.8C110.3 465.8 116.4 463.8 122.6 463.8C128.8 463.8 134.9 465.0 141.1 465.3C147.3 465.7 153.4 465.8 159.6 465.8C165.8 465.8 171.9 465.6 178.1 464.8C184.3 464.1 190.4 462.4 196.6 461.1C202.8 459.8 208.9 457.1 215.1 457.1C221.3 457.1 227.4 466.3 233.6 466.3C239.8 466.3 246.0 465.8 252.1 465.6C258.3 465.5 264.5 465.5 270.6 465.5C276.8 465.4 283.0 465.4 289.1 465.4C295.3 465.4 301.5 465.4 307.6 465.7C313.8 466.0 320.0 466.9 326.1 466.9C332.3 466.9 338.5 466.0 344.6 465.7C350.8 465.4 357.0 465.4 363.1 465.4C369.3 465.4 375.5 465.4 381.6 465.5C387.8 465.5 394.0 465.5 400.2 465.5C406.3 465.5 412.5 465.5 418.7 465.5C424.8 465.4 431.0 465.4 437.2 465.4C443.3 465.4 449.5 466.9 455.7 466.9C461.8 466.9 468.0 466.1 474.2 465.9C480.3 465.6 486.5 465.6 492.7 465.5C498.8 465.5 505.0 465.4 511.2 465.4C517.3 465.4 523.5 465.9 529.7 465.9C535.8 465.9 542.0 465.3 548.2 465.0C554.4 464.7 560.5 464.3 566.7 464.3C572.9 464.3 579.0 466.2 585.2 466.2C591.4 466.2 597.5 466.2 603.7 466.0C609.9 465.8 616.0 449.2 622.2 449.2C628.4 449.2 634.5 468.0 640.7 468.0C646.9 468.0 653.0 466.0 659.2 465.5C665.4 465.0 671.5 465.0 677.7 465.0C683.9 465.0 690.0 465.7 696.2 465.7C702.4 465.7 708.6 465.5 714.7 465.5C720.9 465.5 727.1 465.5 733.2 465.5C739.4 465.6 745.6 466.2 751.7 466.5C757.9 466.8 764.1 467.5 770.2 467.5C776.4 467.5 782.6 463.8 788.7 463.8C794.9 463.8 801.1 466.0 807.2 466.0C813.4 466.0 819.6 465.8 825.7 465.7C831.9 465.6 838.1 465.2 844.2 465.2C850.4 465.2 856.6 467.0 862.8 467.0C868.9 467.0 875.1 464.5 881.3 464.5C887.4 464.5 893.6 467.2 899.8 467.2C905.9 467.2 912.1 465.9 918.3 465.7C924.4 465.5 930.6 465.5 936.8 465.5C942.9 465.5 949.1 466.5 955.3 466.5C961.4 466.5 967.6 465.0 973.8 465.0C979.9 465.0 986.1 467.2 992.3 467.2C998.4 467.2 1004.6 464.2 1010.8 464.2C1017.0 464.2 1023.1 466.9 1029.3 466.9C1035.5 466.9 1041.6 466.4 1047.8 466.0C1054.0 465.6 1060.1 464.4 1066.3 464.4C1072.5 464.4 1078.6 467.9 1084.8 467.9C1091.0 467.9 1097.1 465.0 1103.3 465.0C1109.5 465.0 1115.6 465.0 1121.8 465.6C1128.0 466.2 1134.1 469.0 1140.3 469.0C1146.5 469.0 1152.6 463.8 1158.8 463.8C1165.0 463.8 1171.2 467.5 1177.3 467.5C1183.5 467.5 1189.7 296.4 1195.8 296.4C1202.0 296.4 1208.2 297.0 1214.3 307.0C1220.5 317.1 1226.7 341.3 1232.8 356.6C1239.0 371.8 1245.2 383.5 1251.3 398.5C1257.5 413.6 1263.7 435.6 1269.8 446.9C1276.0 458.2 1282.2 466.5 1288.3 466.5C1294.5 466.5 1300.7 464.0 1306.8 464.0C1313.0 464.0 1319.2 464.9 1325.4 465.6C1331.5 466.3 1337.7 468.4 1343.9 468.4C1350.0 468.4 1356.2 463.4 1362.4 463.4C1368.5 463.4 1374.7 467.5 1380.9 467.5C1387.0 467.5 1393.2 463.5 1399.4 463.5C1405.5 463.5 1411.7 465.2 1417.9 465.4C1424.0 465.6 1430.2 465.5 1436.4 465.6" fill="none" stroke="#d1b94f" stroke-width="1.7" stroke-linejoin="round"/><path d="M196.8 276V470.6" stroke="#fb8a94" stroke-width="1.2"/><path d="M215.2 276V470.6" stroke="#f07fb0" stroke-width="1.2"/><path d="M622.4 276V470.6" stroke="#f07fb0" stroke-width="1.2"/><path d="M640.6 276V470.6" stroke="#ffab66" stroke-width="1.2"/><path d="M1196.4 276V470.6" stroke="#f5303c" stroke-width="1.2"/><path d="M1215 276V470.6" stroke="#fb8a8f" stroke-width="1.2"/><path d="M1233.2 276V470.6" stroke="#f5404a" stroke-width="1.2"/><path d="M1251.8 276V470.6" stroke="#fdb4b8" stroke-width="1.2"/><path d="M1270.2 276V470.6" stroke="#ee5da0" stroke-width="1.2"/><path d="M1418.4 276V470.6" stroke="#ffab66" stroke-width="1.2"/><circle cx="196.8" cy="270" r="6.6" fill="#ff0000"/><text x="196.70000000000002" y="272.9" text-anchor="middle" font-family="Liberation Sans, sans-serif" font-weight="700" font-size="7.9" fill="#fff" letter-spacing="-0.25">9+</text><circle cx="215.2" cy="270" r="6.6" fill="#ee3d8c"/><text x="215.1" y="272.9" text-anchor="middle" font-family="Liberation Sans, sans-serif" font-weight="700" font-size="7.9" fill="#fff" letter-spacing="-0.25">9+</text><circle cx="622.4" cy="270" r="6.6" fill="#ee3d8c"/><text x="622.3" y="272.9" text-anchor="middle" font-family="Liberation Sans, sans-serif" font-weight="700" font-size="7.9" fill="#fff" letter-spacing="-0.25">9+</text><circle cx="640.6" cy="270" r="6.6" fill="#ff8a14"/><text x="640.5" y="272.9" text-anchor="middle" font-family="Liberation Sans, sans-serif" font-weight="700" font-size="7.9" fill="#fff" letter-spacing="-0.25">9+</text><circle cx="1196.4" cy="270" r="6.6" fill="#ff0000"/><text x="1196.3000000000002" y="272.9" text-anchor="middle" font-family="Liberation Sans, sans-serif" font-weight="700" font-size="7.9" fill="#fff" letter-spacing="-0.25">9+</text><circle cx="1215" cy="270" r="6.6" fill="#ff0000"/><text x="1214.9" y="272.9" text-anchor="middle" font-family="Liberation Sans, sans-serif" font-weight="700" font-size="7.9" fill="#fff" letter-spacing="-0.25">9+</text><circle cx="1233.2" cy="270" r="6.6" fill="#ff0000"/><text x="1233.1000000000001" y="272.9" text-anchor="middle" font-family="Liberation Sans, sans-serif" font-weight="700" font-size="7.9" fill="#fff" letter-spacing="-0.25">9+</text><circle cx="1251.8" cy="270" r="6.6" fill="#ff0000"/><text x="1251.7" y="272.9" text-anchor="middle" font-family="Liberation Sans, sans-serif" font-weight="700" font-size="7.9" fill="#fff" letter-spacing="-0.25">9+</text><circle cx="1270.2" cy="270" r="6.6" fill="#ee3d8c"/><text x="1270.1000000000001" y="272.9" text-anchor="middle" font-family="Liberation Sans, sans-serif" font-weight="700" font-size="7.9" fill="#fff" letter-spacing="-0.25">9+</text><circle cx="1418.4" cy="270" r="6.6" fill="#ff8a14"/><text x="1418.3000000000002" y="272.9" text-anchor="middle" font-family="Liberation Sans, sans-serif" font-weight="700" font-size="7.9" fill="#fff" letter-spacing="-0.25">9+</text></svg>
<span class="t" style="left:48px;top:270.9px;font:400 8.6px/12.04px 'Liberation Sans','DejaVu Sans',sans-serif;color:#646a77;letter-spacing:0.287px;">250,000</span>
<span class="t" style="left:48px;top:309.73px;font:400 8.6px/12.04px 'Liberation Sans','DejaVu Sans',sans-serif;color:#646a77;letter-spacing:0.287px;">200,000</span>
<span class="t" style="left:48.6px;top:348.56px;font:400 8.6px/12.04px 'Liberation Sans','DejaVu Sans',sans-serif;color:#646a77;letter-spacing:0.187px;">150,000</span>
<span class="t" style="left:48.6px;top:387.39px;font:400 8.6px/12.04px 'Liberation Sans','DejaVu Sans',sans-serif;color:#646a77;letter-spacing:0.187px;">100,000</span>
<span class="t" style="left:53.4px;top:426.22px;font:400 8.6px/12.04px 'Liberation Sans','DejaVu Sans',sans-serif;color:#646a77;letter-spacing:0.221px;">50,000</span>
<span class="t" style="left:75.6px;top:465.05px;font:400 8.6px/12.04px 'Liberation Sans','DejaVu Sans',sans-serif;color:#646a77;letter-spacing:0.000px;">0</span>
<span class="t" style="left:90.6px;top:471.8px;font:400 8.6px/12.04px 'Liberation Sans','DejaVu Sans',sans-serif;color:#646a77;letter-spacing:0.021px;">16:30</span>
<span class="t" style="left:90.6px;top:480.6px;font:400 8.6px/12.04px 'Liberation Sans','DejaVu Sans',sans-serif;color:#646a77;letter-spacing:0.026px;">July 11, 2024</span>
<span class="t" style="left:161.2px;top:471.8px;font:400 8.6px/12.04px 'Liberation Sans','DejaVu Sans',sans-serif;color:#646a77;letter-spacing:0.221px;">16:35</span>
<span class="t" style="left:253.7px;top:471.8px;font:400 8.6px/12.04px 'Liberation Sans','DejaVu Sans',sans-serif;color:#646a77;letter-spacing:0.221px;">16:40</span>
<span class="t" style="left:346.2px;top:471.8px;font:400 8.6px/12.04px 'Liberation Sans','DejaVu Sans',sans-serif;color:#646a77;letter-spacing:0.221px;">16:45</span>
<span class="t" style="left:438.8px;top:471.8px;font:400 8.6px/12.04px 'Liberation Sans','DejaVu Sans',sans-serif;color:#646a77;letter-spacing:0.221px;">16:50</span>
<span class="t" style="left:531.3px;top:471.8px;font:400 8.6px/12.04px 'Liberation Sans','DejaVu Sans',sans-serif;color:#646a77;letter-spacing:0.221px;">16:55</span>
<span class="t" style="left:623.8px;top:471.8px;font:400 8.6px/12.04px 'Liberation Sans','DejaVu Sans',sans-serif;color:#646a77;letter-spacing:0.221px;">17:00</span>
<span class="t" style="left:716.3px;top:471.8px;font:400 8.6px/12.04px 'Liberation Sans','DejaVu Sans',sans-serif;color:#646a77;letter-spacing:0.221px;">17:05</span>
<span class="t" style="left:808.8px;top:471.8px;font:400 8.6px/12.04px 'Liberation Sans','DejaVu Sans',sans-serif;color:#646a77;letter-spacing:0.221px;">17:10</span>
<span class="t" style="left:901.4px;top:471.8px;font:400 8.6px/12.04px 'Liberation Sans','DejaVu Sans',sans-serif;color:#646a77;letter-spacing:0.221px;">17:15</span>
<span class="t" style="left:993.9px;top:471.8px;font:400 8.6px/12.04px 'Liberation Sans','DejaVu Sans',sans-serif;color:#646a77;letter-spacing:0.221px;">17:20</span>
<span class="t" style="left:1086.4px;top:471.8px;font:400 8.6px/12.04px 'Liberation Sans','DejaVu Sans',sans-serif;color:#646a77;letter-spacing:0.221px;">17:25</span>
<span class="t" style="left:1178.9px;top:471.8px;font:400 8.6px/12.04px 'Liberation Sans','DejaVu Sans',sans-serif;color:#646a77;letter-spacing:0.221px;">17:30</span>
<span class="t" style="left:1271.4px;top:471.8px;font:400 8.6px/12.04px 'Liberation Sans','DejaVu Sans',sans-serif;color:#646a77;letter-spacing:0.221px;">17:35</span>
<span class="t" style="left:1364.0px;top:471.8px;font:400 8.6px/12.04px 'Liberation Sans','DejaVu Sans',sans-serif;color:#646a77;letter-spacing:0.221px;">17:40</span>
<span class="t" style="left:720.4px;top:497.8px;font:700 10px/14.0px 'Liberation Sans','DejaVu Sans',sans-serif;color:#1a1c21;letter-spacing:0.216px;">@timestamp per minute</span>
<div class="b" style="left:-25.2px;top:366.8px;width:100px;height:14px;transform:rotate(-90deg);text-align:center"><span style="font:700 10px/14px 'Liberation Sans',sans-serif;color:#1a1c21;letter-spacing:0.12px;white-space:nowrap">Count of records</span></div>
<div class="b" style="left:1484.1px;top:280.0px;width:6.4px;height:6.4px;background:#54b399;border-radius:50%"></div>
<span class="t" style="left:1497.4px;top:276.2px;font:400 10px/14.0px 'Liberation Sans','DejaVu Sans',sans-serif;color:#343741;letter-spacing:0.404px;">Count of records</span>
<div class="b" style="left:1484.1px;top:298.59999999999997px;width:6.4px;height:6.4px;background:#6092c0;border-radius:50%"></div>
<span class="t" style="left:1497.4px;top:294.8px;font:400 10px/14.0px 'Liberation Sans','DejaVu Sans',sans-serif;color:#343741;letter-spacing:0.312px;">Average of</span>
<span class="t" style="left:1497.4px;top:308.1px;font:400 10px/14.0px 'Liberation Sans','DejaVu Sans',sans-serif;color:#343741;letter-spacing:0.206px;">lag_in_millis.sr-</span>
<span class="t" style="left:1497.4px;top:321.4px;font:400 10px/14.0px 'Liberation Sans','DejaVu Sans',sans-serif;color:#343741;letter-spacing:0.464px;">c_kfk</span>
<div class="b" style="left:1484.1px;top:341.79999999999995px;width:6.4px;height:6.4px;background:#d36086;border-radius:50%"></div>
<span class="t" style="left:1497.4px;top:338.0px;font:400 10px/14.0px 'Liberation Sans','DejaVu Sans',sans-serif;color:#343741;letter-spacing:0.312px;">Average of</span>
<span class="t" style="left:1497.4px;top:351.3px;font:400 10px/14.0px 'Liberation Sans','DejaVu Sans',sans-serif;color:#343741;letter-spacing:0.201px;">lag_in_millis.k-</span>
<span class="t" style="left:1497.4px;top:364.6px;font:400 10px/14.0px 'Liberation Sans','DejaVu Sans',sans-serif;color:#343741;letter-spacing:0.359px;">fk_ls</span>
<div class="b" style="left:1484.1px;top:385.0px;width:6.4px;height:6.4px;background:#8077b8;border-radius:50%"></div>
<span class="t" style="left:1497.4px;top:381.2px;font:400 10px/14.0px 'Liberation Sans','DejaVu Sans',sans-serif;color:#343741;letter-spacing:0.312px;">Average of</span>
<span class="t" style="left:1497.4px;top:394.5px;font:400 10px/14.0px 'Liberation Sans','DejaVu Sans',sans-serif;color:#343741;letter-spacing:0.224px;">lag_in_mil-</span>
<span class="t" style="left:1497.4px;top:407.8px;font:400 10px/14.0px 'Liberation Sans','DejaVu Sans',sans-serif;color:#343741;letter-spacing:0.218px;">lis.within_ls</span>
<div class="b" style="left:1484.1px;top:428.4px;width:6.4px;height:6.4px;background:#ca8eae;border-radius:50%"></div>
<span class="t" style="left:1497.4px;top:424.6px;font:400 10px/14.0px 'Liberation Sans','DejaVu Sans',sans-serif;color:#343741;letter-spacing:0.312px;">Average of</span>
<span class="t" style="left:1497.4px;top:437.9px;font:400 10px/14.0px 'Liberation Sans','DejaVu Sans',sans-serif;color:#343741;letter-spacing:0.159px;">lag_in_millis.l-</span>
<span class="t" style="left:1497.4px;top:451.2px;font:400 10px/14.0px 'Liberation Sans','DejaVu Sans',sans-serif;color:#343741;letter-spacing:0.025px;">s_es</span>
<div class="b" style="left:1484.1px;top:471.59999999999997px;width:6.4px;height:6.4px;background:#d6bf57;border-radius:50%"></div>
<span class="t" style="left:1497.4px;top:467.8px;font:400 10px/14.0px 'Liberation Sans','DejaVu Sans',sans-serif;color:#343741;letter-spacing:0.312px;">Average of</span>
<span class="t" style="left:1497.4px;top:481.1px;font:400 10px/14.0px 'Liberation Sans','DejaVu Sans',sans-serif;color:#343741;letter-spacing:0.224px;">lag_in_mil-</span>
<span class="t" style="left:1497.4px;top:494.4px;font:400 10px/14.0px 'Liberation Sans','DejaVu Sans',sans-serif;color:#343741;letter-spacing:0.204px;">lis.end_end</span>
<div class="b" style="left:7px;top:532.2px;width:1586.2px;height:277.8px;background:#fff;border:1px solid #d3dae6;border-radius:5px"></div>
<span class="t" style="left:14px;top:537.2px;font:700 10px/14.0px 'Liberation Sans','DejaVu Sans',sans-serif;color:#1a1c21;letter-spacing:0.084px;">lag illustration</span>
<div class="b" style="left:1572.6px;top:533px;width:19.6px;height:20px;background:#e9edf3;border-radius:0 4px 0 4px"></div>
<svg style="left:1576.2px;top:541.2px" width="13" height="4" viewBox="0 0 13 4" ><g fill="none" stroke="#1a1c21" stroke-width="1.05"><rect x=".6" y=".6" width="2.3" height="2.5"/><rect x="5" y=".6" width="2.3" height="2.5"/><rect x="9.4" y=".6" width="2.3" height="2.5"/></g></svg>
<svg style="left:1538px;top:539.6px" width="9" height="7" viewBox="0 0 9 7" ><path d="M0 .6h9M1.7 3.4h5.6M3.4 6.2h2.2" stroke="#69707d" stroke-width="0.9" fill="none"/></svg>
<svg style="left:1555.8px;top:536.8px" width="13" height="13" viewBox="0 0 13 13" ><path d="M.6 10.6V1.2c0-.4.3-.7.7-.7h3.6l1.3 1.5h3.6c.4 0 .7.3.7.7v4" fill="none" stroke="#343741" stroke-width="1" stroke-linejoin="round"/><path d="M.6 10.6h5.6" stroke="#343741" stroke-width="1"/><circle cx="9.6" cy="9.2" r="3.2" fill="#1a1c21"/><path d="M8.1 9.3l1.1 1.1 2-2.2" fill="none" stroke="#fff" stroke-width="0.9"/></svg>
<span class="t" style="left:14px;top:564.83px;font:700 11.67px/16.34px 'Liberation Sans','DejaVu Sans',sans-serif;color:#1a1c21;letter-spacing:0.749px;">13,998</span>
<span class="t" style="left:57.4px;top:564.83px;font:400 11.67px/16.34px 'Liberation Sans','DejaVu Sans',sans-serif;color:#343741;letter-spacing:0.521px;">documents</span>
<div class="b" style="left:1312px;top:559.4px;width:102.8px;height:26.4px;background:#fff;border:1px solid #d5dbe6;border-radius:4px"></div>
<svg style="left:1319px;top:566px" width="13.4" height="13" viewBox="0 0 13.4 13" ><g fill="none" stroke="#343741" stroke-width="0.95"><rect x=".5" y=".5" width="12.4" height="12" rx="1.6"/><path d="M.5 3.6h12.4"/></g><g stroke="#343741" stroke-width="0.95"><path d="M2.4 6h1.8M5.4 6h5.6M2.4 8.2h1.8M5.4 8.2h5.6M2.4 10.4h1.8M5.4 10.4h5.6"/></g></svg>
<span class="t" style="left:1339.4px;top:566.9px;font:400 10px/14.0px 'Liberation Sans','DejaVu Sans',sans-serif;color:#343741;letter-spacing:0.322px;-webkit-text-stroke:0.26px #343741;">Columns</span>
<div class="b" style="left:1387.8px;top:566.2px;width:19.6px;height:13.2px;background:#e0e5ee;border-radius:2.5px"></div>
<span class="t" style="left:1392px;top:566.9px;font:400 10px/14.0px 'Liberation Sans','DejaVu Sans',sans-serif;color:#343741;letter-spacing:0.275px;-webkit-text-stroke:0.26px #343741;">12</span>
<div class="b" style="left:1422px;top:559.4px;width:103.8px;height:26.4px;background:#fff;border:1px solid #d5dbe6;border-radius:4px"></div>
<svg style="left:1431.4px;top:566.8px" width="7.6" height="11.6" viewBox="0 0 7.6 11.6" ><g fill="none" stroke="#343741" stroke-width="0.9"><path d="M3.8.8v10M1.2 3.4l2.6-2.6 2.6 2.6M1.2 8.2l2.6 2.6 2.6-2.6"/></g></svg>
<span class="t" style="left:1449.4px;top:566.9px;font:400 10px/14.0px 'Liberation Sans','DejaVu Sans',sans-serif;color:#343741;letter-spacing:0.453px;-webkit-text-stroke:0.26px #343741;">Sort fields</span>
<div class="b" style="left:1505px;top:566.2px;width:13.2px;height:13.2px;background:#e0e5ee;border-radius:2.5px"></div>
<span class="t" style="left:1509.6px;top:566.9px;font:400 10px/14.0px 'Liberation Sans','DejaVu Sans',sans-serif;color:#343741;letter-spacing:0.000px;-webkit-text-stroke:0.26px #343741;">1</span>
<div class="b" style="left:1532.4px;top:559.4px;width:53.4px;height:26.4px;background:#fff;border:1px solid #d5dbe6;border-radius:4px"></div>
<div class="b" style="left:1559.4px;top:559.4px;width:1.0px;height:26.4px;background:#d5dbe6"></div>
<svg style="left:1539.4px;top:568.2px" width="13.6" height="9" viewBox="0 0 13.6 9" ><g fill="none" stroke="#343741" stroke-width="0.95"><rect x=".5" y=".5" width="12.6" height="8" rx="0.8"/></g><g stroke="#343741" stroke-width="1" stroke-dasharray="1 0.9"><path d="M2.2 2.8h9.4M2.2 4.6h9.4"/></g><path d="M2.2 6.6h5.6M9.4 6.6h2.2" stroke="#343741" stroke-width="1"/></svg>
<svg style="left:1567.2px;top:567.6px" width="12" height="10" viewBox="0 0 12 10" ><g fill="none" stroke="#343741" stroke-width="0.95"><path d="M0 2.4h2.2M5.8 2.4H12M0 7.4h6M9.6 7.4H12"/><circle cx="4" cy="2.4" r="1.7"/><circle cx="7.8" cy="7.4" r="1.7"/></g></svg>
<span class="t" style="left:56px;top:596.45px;font:700 10px/14.0px 'Liberation Sans','DejaVu Sans',sans-serif;color:#1a1c21;letter-spacing:0.293px;">@timestamp</span>
<svg style="left:121.6px;top:597.4px" width="11" height="11" viewBox="0 0 11 11" ><g fill="none" stroke="#343741" stroke-width="0.9"><circle cx="5.5" cy="5.5" r="4.9"/><path d="M5.5 2.4v3.3h2.7"/></g></svg>
<svg style="left:138.6px;top:598px" width="9" height="10" viewBox="0 0 9 10" ><path d="M4.5.4v8.6M.9 5.6l3.6 3.6 3.6-3.6" fill="none" stroke="#343741" stroke-width="0.95"/></svg>
<div class="b" style="left:179px;top:596.3px;width:13.2px;height:13.2px;background:#fffcf5;border:1px solid #f5edd9;border-radius:3px"></div><svg style="left:179px;top:596.3px" width="13.2" height="13.2" viewBox="0 0 13.2 13.2" ><g fill="none" stroke="#6b665c" stroke-width="0.75"><rect x="2.4" y="3" width="8.4" height="7.6" rx="0.9"/><path d="M2.4 5.2h8.4M4.6 1.9v2M8.6 1.9v2"/></g><g fill="#6b665c"><rect x="4" y="6.4" width="1" height="0.9"/><rect x="6.1" y="6.4" width="1" height="0.9"/><rect x="8.2" y="6.4" width="1" height="0.9"/><rect x="4" y="8.2" width="1" height="0.9"/><rect x="6.1" y="8.2" width="1" height="0.9"/><rect x="8.2" y="8.2" width="1" height="0.9"/></g></svg>
<span class="t" style="left:195.8px;top:596.45px;font:700 10px/14.0px 'Liberation Sans','DejaVu Sans',sans-serif;color:#1a1c21;letter-spacing:0.316px;">kafka.timestamp</span>
<div class="b" style="left:318px;top:596.3px;width:13.2px;height:13.2px;background:#fffcf5;border:1px solid #f5edd9;border-radius:3px"></div><svg style="left:318px;top:596.3px" width="13.2" height="13.2" viewBox="0 0 13.2 13.2" ><g fill="none" stroke="#6b665c" stroke-width="0.75"><rect x="2.4" y="3" width="8.4" height="7.6" rx="0.9"/><path d="M2.4 5.2h8.4M4.6 1.9v2M8.6 1.9v2"/></g><g fill="#6b665c"><rect x="4" y="6.4" width="1" height="0.9"/><rect x="6.1" y="6.4" width="1" height="0.9"/><rect x="8.2" y="6.4" width="1" height="0.9"/><rect x="4" y="8.2" width="1" height="0.9"/><rect x="6.1" y="8.2" width="1" height="0.9"/><rect x="8.2" y="8.2" width="1" height="0.9"/></g></svg>
<span class="t" style="left:334.8px;top:596.45px;font:700 10px/14.0px 'Liberation Sans','DejaVu Sans',sans-serif;color:#1a1c21;letter-spacing:0.263px;">logstash.start</span>
<div class="b" style="left:438px;top:596.3px;width:13.2px;height:13.2px;background:#fffcf5;border:1px solid #f5edd9;border-radius:3px"></div><svg style="left:438px;top:596.3px" width="13.2" height="13.2" viewBox="0 0 13.2 13.2" ><g fill="none" stroke="#6b665c" stroke-width="0.75"><rect x="2.4" y="3" width="8.4" height="7.6" rx="0.9"/><path d="M2.4 5.2h8.4M4.6 1.9v2M8.6 1.9v2"/></g><g fill="#6b665c"><rect x="4" y="6.4" width="1" height="0.9"/><rect x="6.1" y="6.4" width="1" height="0.9"/><rect x="8.2" y="6.4" width="1" height="0.9"/><rect x="4" y="8.2" width="1" height="0.9"/><rect x="6.1" y="8.2" width="1" height="0.9"/><rect x="8.2" y="8.2" width="1" height="0.9"/></g></svg>
<span class="t" style="left:454.8px;top:596.45px;font:700 10px/14.0px 'Liberation Sans','DejaVu Sans',sans-serif;color:#1a1c21;letter-spacing:0.192px;">logstash.end</span>
<div class="b" style="left:551.6px;top:596.3px;width:13.2px;height:13.2px;background:#fffcf5;border:1px solid #f5edd9;border-radius:3px"></div><svg style="left:551.6px;top:596.3px" width="13.2" height="13.2" viewBox="0 0 13.2 13.2" ><g fill="none" stroke="#6b665c" stroke-width="0.75"><rect x="2.4" y="3" width="8.4" height="7.6" rx="0.9"/><path d="M2.4 5.2h8.4M4.6 1.9v2M8.6 1.9v2"/></g><g fill="#6b665c"><rect x="4" y="6.4" width="1" height="0.9"/><rect x="6.1" y="6.4" width="1" height="0.9"/><rect x="8.2" y="6.4" width="1" height="0.9"/><rect x="4" y="8.2" width="1" height="0.9"/><rect x="6.1" y="8.2" width="1" height="0.9"/><rect x="8.2" y="8.2" width="1" height="0.9"/></g></svg>
<span class="t" style="left:568.4px;top:596.45px;font:700 10px/14.0px 'Liberation Sans','DejaVu Sans',sans-serif;color:#1a1c21;letter-spacing:0.259px;">event.ingested</span>
<div class="b" style="left:673.4px;top:596.3px;width:13.2px;height:13.2px;background:#e9f5f2;border:1px solid #d3ebe5;border-radius:3px"></div><svg style="left:673.4px;top:596.3px" width="13.2" height="13.2" viewBox="0 0 13.2 13.2" ><g stroke="#4f5a58" stroke-width="0.75" fill="none"><path d="M6.4 3.7L5 9.7M8.4 3.7L7 9.7M4.6 5.7h4.6M4.1 7.7h4.6"/></g></svg>
<span class="t" style="left:689.8px;top:596.45px;font:700 10px/14.0px 'Liberation Sans','DejaVu Sans',sans-serif;color:#1a1c21;letter-spacing:0.014px;">lag_in_millis.</span>
<span class="t" style="left:673.6px;top:609.75px;font:700 10px/14.0px 'Liberation Sans','DejaVu Sans',sans-serif;color:#1a1c21;letter-spacing:0.028px;">src_kfk</span>
<div class="b" style="left:770px;top:596.3px;width:13.2px;height:13.2px;background:#e9f5f2;border:1px solid #d3ebe5;border-radius:3px"></div><svg style="left:770px;top:596.3px" width="13.2" height="13.2" viewBox="0 0 13.2 13.2" ><g stroke="#4f5a58" stroke-width="0.75" fill="none"><path d="M6.4 3.7L5 9.7M8.4 3.7L7 9.7M4.6 5.7h4.6M4.1 7.7h4.6"/></g></svg>
<span class="t" style="left:786.4px;top:596.45px;font:700 10px/14.0px 'Liberation Sans','DejaVu Sans',sans-serif;color:#1a1c21;letter-spacing:0.014px;">lag_in_millis.</span>
<span class="t" style="left:770.2px;top:609.75px;font:700 10px/14.0px 'Liberation Sans','DejaVu Sans',sans-serif;color:#1a1c21;letter-spacing:-0.112px;">kfk_ls</span>
<div class="b" style="left:870px;top:596.3px;width:13.2px;height:13.2px;background:#e9f5f2;border:1px solid #d3ebe5;border-radius:3px"></div><svg style="left:870px;top:596.3px" width="13.2" height="13.2" viewBox="0 0 13.2 13.2" ><g stroke="#4f5a58" stroke-width="0.75" fill="none"><path d="M6.4 3.7L5 9.7M8.4 3.7L7 9.7M4.6 5.7h4.6M4.1 7.7h4.6"/></g></svg>
<span class="t" style="left:886.4px;top:596.45px;font:700 10px/14.0px 'Liberation Sans','DejaVu Sans',sans-serif;color:#1a1c21;letter-spacing:0.014px;">lag_in_millis.</span>
<span class="t" style="left:870.2px;top:609.75px;font:700 10px/14.0px 'Liberation Sans','DejaVu Sans',sans-serif;color:#1a1c21;letter-spacing:0.050px;">within_ls</span>
<div class="b" style="left:967.4px;top:596.3px;width:13.2px;height:13.2px;background:#e9f5f2;border:1px solid #d3ebe5;border-radius:3px"></div><svg style="left:967.4px;top:596.3px" width="13.2" height="13.2" viewBox="0 0 13.2 13.2" ><g stroke="#4f5a58" stroke-width="0.75" fill="none"><path d="M6.4 3.7L5 9.7M8.4 3.7L7 9.7M4.6 5.7h4.6M4.1 7.7h4.6"/></g></svg>
<span class="t" style="left:983.8px;top:596.45px;font:700 10px/14.0px 'Liberation Sans','DejaVu Sans',sans-serif;color:#1a1c21;letter-spacing:0.014px;">lag_in_millis.</span>
<span class="t" style="left:967.6px;top:609.75px;font:700 10px/14.0px 'Liberation Sans','DejaVu Sans',sans-serif;color:#1a1c21;letter-spacing:-0.158px;">ls_es</span>
<div class="b" style="left:1064px;top:596.3px;width:13.2px;height:13.2px;background:#e9f5f2;border:1px solid #d3ebe5;border-radius:3px"></div><svg style="left:1064px;top:596.3px" width="13.2" height="13.2" viewBox="0 0 13.2 13.2" ><g stroke="#4f5a58" stroke-width="0.75" fill="none"><path d="M6.4 3.7L5 9.7M8.4 3.7L7 9.7M4.6 5.7h4.6M4.1 7.7h4.6"/></g></svg>
<span class="t" style="left:1080.4px;top:596.45px;font:700 10px/14.0px 'Liberation Sans','DejaVu Sans',sans-serif;color:#1a1c21;letter-spacing:0.074px;">lag_in_millis.en</span>
<span class="t" style="left:1064.2px;top:609.75px;font:700 10px/14.0px 'Liberation Sans','DejaVu Sans',sans-serif;color:#1a1c21;letter-spacing:0.087px;">d_end</span>
<div class="b" style="left:1179px;top:596.3px;width:13.2px;height:13.2px;background:#eaeff9;border:1px solid #d5dff0;border-radius:3px"></div><svg style="left:1179px;top:596.3px" width="13.2" height="13.2" viewBox="0 0 13.2 13.2" ><text x="6.7" y="9.6" text-anchor="middle" font-family="Liberation Sans, sans-serif" font-style="italic" font-weight="700" font-size="8.2" fill="#2a3a5e">k</text></svg>
<span class="t" style="left:1195.8px;top:596.45px;font:700 10px/14.0px 'Liberation Sans','DejaVu Sans',sans-serif;color:#1a1c21;letter-spacing:0.255px;">kafka.topic</span>
<div class="b" style="left:1374px;top:596.3px;width:13.2px;height:13.2px;background:#eaeff9;border:1px solid #d5dff0;border-radius:3px"></div><svg style="left:1374px;top:596.3px" width="13.2" height="13.2" viewBox="0 0 13.2 13.2" ><text x="6.7" y="9.6" text-anchor="middle" font-family="Liberation Sans, sans-serif" font-style="italic" font-weight="700" font-size="8.2" fill="#2a3a5e">k</text></svg>
<span class="t" style="left:1391px;top:596.45px;font:700 10px/14.0px 'Liberation Sans','DejaVu Sans',sans-serif;color:#1a1c21;letter-spacing:0.134px;">kafka.consumer_group</span>
<div class="b" style="left:8px;top:629.3px;width:1584.2px;height:1.1px;background:#e0e5ee"></div>
<div class="b" style="left:8px;top:670.9699999999999px;width:1584.2px;height:1.0px;background:#d8deea"></div>
<svg style="left:13.8px;top:639.1999999999999px" width="9.4" height="9.4" viewBox="0 0 9.4 9.4" ><g fill="none" stroke="#5a606b" stroke-width="0.8"><path d="M1 8.4L8.4 1M5.6.8h3v3M3.8 8.6h-3v-3"/></g></svg>
<div class="b" style="left:32.6px;top:637.0px;width:13.4px;height:13.4px;background:#fff;border:1px solid #aeb4c0;border-radius:3.3px"></div>
<span class="t" style="left:56px;top:639.1px;font:400 10px/14.0px 'Liberation Mono','DejaVu Sans Mono',monospace;color:#40444f;letter-spacing:-0.001px;">Jul 11, 2024 @</span>
<span class="t" style="left:56px;top:653.1px;font:400 10px/14.0px 'Liberation Mono','DejaVu Sans Mono',monospace;color:#40444f;letter-spacing:-0.001px;">17:45:42.475</span>
<span class="t" style="left:179px;top:639.1px;font:400 10px/14.0px 'Liberation Mono','DejaVu Sans Mono',monospace;color:#40444f;letter-spacing:-0.001px;">Jul 11, 2024 @</span>
<span class="t" style="left:179px;top:653.1px;font:400 10px/14.0px 'Liberation Mono','DejaVu Sans Mono',monospace;color:#40444f;letter-spacing:-0.001px;">17:45:52.509</span>
<span class="t" style="left:318px;top:639.1px;font:400 10px/14.0px 'Liberation Mono','DejaVu Sans Mono',monospace;color:#40444f;letter-spacing:-0.001px;">Jul 11, 2024 @</span>
<span class="t" style="left:318px;top:653.1px;font:400 10px/14.0px 'Liberation Mono','DejaVu Sans Mono',monospace;color:#40444f;letter-spacing:-0.001px;">17:45:52.626</span>
<span class="t" style="left:438px;top:639.1px;font:400 10px/14.0px 'Liberation Mono','DejaVu Sans Mono',monospace;color:#40444f;letter-spacing:-0.001px;">Jul 11, 2024 @</span>
<span class="t" style="left:438px;top:653.1px;font:400 10px/14.0px 'Liberation Mono','DejaVu Sans Mono',monospace;color:#40444f;letter-spacing:-0.001px;">17:45:52.639</span>
<span class="t" style="left:551.6px;top:639.1px;font:400 10px/14.0px 'Liberation Mono','DejaVu Sans Mono',monospace;color:#40444f;letter-spacing:-0.001px;">Jul 11, 2024 @</span>
<span class="t" style="left:551.6px;top:653.1px;font:400 10px/14.0px 'Liberation Mono','DejaVu Sans Mono',monospace;color:#40444f;letter-spacing:-0.001px;">17:45:52.000</span>
<span class="t" style="left:719.6px;top:639.1px;font:400 10px/14.0px 'Liberation Mono','DejaVu Sans Mono',monospace;color:#40444f;letter-spacing:-0.003px;">10,034</span>
<span class="t" style="left:837.6px;top:639.1px;font:400 10px/14.0px 'Liberation Mono','DejaVu Sans Mono',monospace;color:#40444f;letter-spacing:-0.008px;">117</span>
<span class="t" style="left:941.2px;top:639.1px;font:400 10px/14.0px 'Liberation Mono','DejaVu Sans Mono',monospace;color:#40444f;letter-spacing:-0.016px;">12</span>
<span class="t" style="left:1038.2px;top:639.1px;font:400 10px/14.0px 'Liberation Mono','DejaVu Sans Mono',monospace;color:#40444f;letter-spacing:-0.016px;">13</span>
<span class="t" style="left:1129.2px;top:639.1px;font:400 10px/14.0px 'Liberation Mono','DejaVu Sans Mono',monospace;color:#40444f;letter-spacing:-0.003px;">10,177</span>
<span class="t" style="left:1179px;top:639.1px;font:400 10px/14.0px 'Liberation Mono','DejaVu Sans Mono',monospace;color:#40444f;letter-spacing:-0.001px;">windows-events</span>
<span class="t" style="left:1374px;top:639.1px;font:400 10px/14.0px 'Liberation Mono','DejaVu Sans Mono',monospace;color:#40444f;letter-spacing:-0.001px;">logstash-windows-events-group-soc</span>
<div class="b" style="left:8px;top:671.8699999999999px;width:1584.2px;height:40.87px;background:#f5f7fa"></div>
<div class="b" style="left:8px;top:712.6399999999999px;width:1584.2px;height:1.0px;background:#d8deea"></div>
<svg style="left:13.8px;top:680.8699999999999px" width="9.4" height="9.4" viewBox="0 0 9.4 9.4" ><g fill="none" stroke="#5a606b" stroke-width="0.8"><path d="M1 8.4L8.4 1M5.6.8h3v3M3.8 8.6h-3v-3"/></g></svg>
<div class="b" style="left:32.6px;top:678.67px;width:13.4px;height:13.4px;background:#fff;border:1px solid #aeb4c0;border-radius:3.3px"></div>
<span class="t" style="left:56px;top:680.77px;font:400 10px/14.0px 'Liberation Mono','DejaVu Sans Mono',monospace;color:#40444f;letter-spacing:-0.001px;">Jul 11, 2024 @</span>
<span class="t" style="left:56px;top:694.77px;font:400 10px/14.0px 'Liberation Mono','DejaVu Sans Mono',monospace;color:#40444f;letter-spacing:-0.001px;">17:45:42.475</span>
<span class="t" style="left:179px;top:680.77px;font:400 10px/14.0px 'Liberation Mono','DejaVu Sans Mono',monospace;color:#40444f;letter-spacing:-0.001px;">Jul 11, 2024 @</span>
<span class="t" style="left:179px;top:694.77px;font:400 10px/14.0px 'Liberation Mono','DejaVu Sans Mono',monospace;color:#40444f;letter-spacing:-0.001px;">17:45:52.509</span>
<span class="t" style="left:318px;top:680.77px;font:400 10px/14.0px 'Liberation Mono','DejaVu Sans Mono',monospace;color:#40444f;letter-spacing:-0.001px;">Jul 11, 2024 @</span>
<span class="t" style="left:318px;top:694.77px;font:400 10px/14.0px 'Liberation Mono','DejaVu Sans Mono',monospace;color:#40444f;letter-spacing:-0.001px;">17:45:52.623</span>
<span class="t" style="left:438px;top:680.77px;font:400 10px/14.0px 'Liberation Mono','DejaVu Sans Mono',monospace;color:#40444f;letter-spacing:-0.001px;">Jul 11, 2024 @</span>
<span class="t" style="left:438px;top:694.77px;font:400 10px/14.0px 'Liberation Mono','DejaVu Sans Mono',monospace;color:#40444f;letter-spacing:-0.001px;">17:45:52.624</span>
<span class="t" style="left:551.6px;top:680.77px;font:400 10px/14.0px 'Liberation Mono','DejaVu Sans Mono',monospace;color:#40444f;letter-spacing:-0.001px;">Jul 11, 2024 @</span>
<span class="t" style="left:551.6px;top:694.77px;font:400 10px/14.0px 'Liberation Mono','DejaVu Sans Mono',monospace;color:#40444f;letter-spacing:-0.001px;">17:45:52.000</span>
<span class="t" style="left:719.6px;top:680.77px;font:400 10px/14.0px 'Liberation Mono','DejaVu Sans Mono',monospace;color:#40444f;letter-spacing:-0.003px;">10,034</span>
<span class="t" style="left:837.6px;top:680.77px;font:400 10px/14.0px 'Liberation Mono','DejaVu Sans Mono',monospace;color:#40444f;letter-spacing:-0.008px;">114</span>
<span class="t" style="left:947.2px;top:680.77px;font:400 10px/14.0px 'Liberation Mono','DejaVu Sans Mono',monospace;color:#40444f;letter-spacing:0.000px;">0</span>
<span class="t" style="left:1038.2px;top:680.77px;font:400 10px/14.0px 'Liberation Mono','DejaVu Sans Mono',monospace;color:#40444f;letter-spacing:-0.016px;">30</span>
<span class="t" style="left:1129.2px;top:680.77px;font:400 10px/14.0px 'Liberation Mono','DejaVu Sans Mono',monospace;color:#40444f;letter-spacing:-0.003px;">10,180</span>
<span class="t" style="left:1179px;top:680.77px;font:400 10px/14.0px 'Liberation Mono','DejaVu Sans Mono',monospace;color:#40444f;letter-spacing:-0.001px;">windows-events</span>
<span class="t" style="left:1374px;top:680.77px;font:400 10px/14.0px 'Liberation Mono','DejaVu Sans Mono',monospace;color:#40444f;letter-spacing:-0.001px;">logstash-windows-events-group-soc</span>
<div class="b" style="left:8px;top:754.31px;width:1584.2px;height:1.0px;background:#d8deea"></div>
<svg style="left:13.8px;top:722.54px" width="9.4" height="9.4" viewBox="0 0 9.4 9.4" ><g fill="none" stroke="#5a606b" stroke-width="0.8"><path d="M1 8.4L8.4 1M5.6.8h3v3M3.8 8.6h-3v-3"/></g></svg>
<div class="b" style="left:32.6px;top:720.34px;width:13.4px;height:13.4px;background:#fff;border:1px solid #aeb4c0;border-radius:3.3px"></div>
<span class="t" style="left:56px;top:722.44px;font:400 10px/14.0px 'Liberation Mono','DejaVu Sans Mono',monospace;color:#40444f;letter-spacing:-0.001px;">Jul 11, 2024 @</span>
<span class="t" style="left:56px;top:736.44px;font:400 10px/14.0px 'Liberation Mono','DejaVu Sans Mono',monospace;color:#40444f;letter-spacing:-0.001px;">17:45:42.475</span>
<span class="t" style="left:179px;top:722.44px;font:400 10px/14.0px 'Liberation Mono','DejaVu Sans Mono',monospace;color:#40444f;letter-spacing:-0.001px;">Jul 11, 2024 @</span>
<span class="t" style="left:179px;top:736.44px;font:400 10px/14.0px 'Liberation Mono','DejaVu Sans Mono',monospace;color:#40444f;letter-spacing:-0.001px;">17:45:52.508</span>
<span class="t" style="left:318px;top:722.44px;font:400 10px/14.0px 'Liberation Mono','DejaVu Sans Mono',monospace;color:#40444f;letter-spacing:-0.001px;">Jul 11, 2024 @</span>
<span class="t" style="left:318px;top:736.44px;font:400 10px/14.0px 'Liberation Mono','DejaVu Sans Mono',monospace;color:#40444f;letter-spacing:-0.001px;">17:45:52.620</span>
<span class="t" style="left:438px;top:722.44px;font:400 10px/14.0px 'Liberation Mono','DejaVu Sans Mono',monospace;color:#40444f;letter-spacing:-0.001px;">Jul 11, 2024 @</span>
<span class="t" style="left:438px;top:736.44px;font:400 10px/14.0px 'Liberation Mono','DejaVu Sans Mono',monospace;color:#40444f;letter-spacing:-0.001px;">17:45:52.621</span>
<span class="t" style="left:551.6px;top:722.44px;font:400 10px/14.0px 'Liberation Mono','DejaVu Sans Mono',monospace;color:#40444f;letter-spacing:-0.001px;">Jul 11, 2024 @</span>
<span class="t" style="left:551.6px;top:736.44px;font:400 10px/14.0px 'Liberation Mono','DejaVu Sans Mono',monospace;color:#40444f;letter-spacing:-0.001px;">17:45:52.000</span>
<span class="t" style="left:719.6px;top:722.44px;font:400 10px/14.0px 'Liberation Mono','DejaVu Sans Mono',monospace;color:#40444f;letter-spacing:-0.003px;">10,033</span>
<span class="t" style="left:837.6px;top:722.44px;font:400 10px/14.0px 'Liberation Mono','DejaVu Sans Mono',monospace;color:#40444f;letter-spacing:-0.008px;">112</span>
<span class="t" style="left:947.2px;top:722.44px;font:400 10px/14.0px 'Liberation Mono','DejaVu Sans Mono',monospace;color:#40444f;letter-spacing:0.000px;">0</span>
<span class="t" style="left:1038.2px;top:722.44px;font:400 10px/14.0px 'Liberation Mono','DejaVu Sans Mono',monospace;color:#40444f;letter-spacing:-0.016px;">22</span>
<span class="t" style="left:1129.2px;top:722.44px;font:400 10px/14.0px 'Liberation Mono','DejaVu Sans Mono',monospace;color:#40444f;letter-spacing:-0.003px;">10,169</span>
<span class="t" style="left:1179px;top:722.44px;font:400 10px/14.0px 'Liberation Mono','DejaVu Sans Mono',monospace;color:#40444f;letter-spacing:-0.001px;">windows-events</span>
<span class="t" style="left:1374px;top:722.44px;font:400 10px/14.0px 'Liberation Mono','DejaVu Sans Mono',monospace;color:#40444f;letter-spacing:-0.001px;">logstash-windows-events-group-soc</span>
<div class="b" style="left:8px;top:755.2099999999999px;width:1584.2px;height:40.87px;background:#f5f7fa"></div>
<div class="b" style="left:8px;top:795.9799999999999px;width:1584.2px;height:1.0px;background:#d8deea"></div>
<svg style="left:13.8px;top:764.2099999999999px" width="9.4" height="9.4" viewBox="0 0 9.4 9.4" ><g fill="none" stroke="#5a606b" stroke-width="0.8"><path d="M1 8.4L8.4 1M5.6.8h3v3M3.8 8.6h-3v-3"/></g></svg>
<div class="b" style="left:32.6px;top:762.01px;width:13.4px;height:13.4px;background:#fff;border:1px solid #aeb4c0;border-radius:3.3px"></div>
<span class="t" style="left:56px;top:764.11px;font:400 10px/14.0px 'Liberation Mono','DejaVu Sans Mono',monospace;color:#40444f;letter-spacing:-0.001px;">Jul 11, 2024 @</span>
<span class="t" style="left:56px;top:778.11px;font:400 10px/14.0px 'Liberation Mono','DejaVu Sans Mono',monospace;color:#40444f;letter-spacing:-0.001px;">17:45:42.475</span>
<span class="t" style="left:179px;top:764.11px;font:400 10px/14.0px 'Liberation Mono','DejaVu Sans Mono',monospace;color:#40444f;letter-spacing:-0.001px;">Jul 11, 2024 @</span>
<span class="t" style="left:179px;top:778.11px;font:400 10px/14.0px 'Liberation Mono','DejaVu Sans Mono',monospace;color:#40444f;letter-spacing:-0.001px;">17:45:52.509</span>
<span class="t" style="left:318px;top:764.11px;font:400 10px/14.0px 'Liberation Mono','DejaVu Sans Mono',monospace;color:#40444f;letter-spacing:-0.001px;">Jul 11, 2024 @</span>
<span class="t" style="left:318px;top:778.11px;font:400 10px/14.0px 'Liberation Mono','DejaVu Sans Mono',monospace;color:#40444f;letter-spacing:-0.001px;">17:45:52.631</span>
<span class="t" style="left:438px;top:764.11px;font:400 10px/14.0px 'Liberation Mono','DejaVu Sans Mono',monospace;color:#40444f;letter-spacing:-0.001px;">Jul 11, 2024 @</span>
<span class="t" style="left:438px;top:778.11px;font:400 10px/14.0px 'Liberation Mono','DejaVu Sans Mono',monospace;color:#40444f;letter-spacing:-0.001px;">17:45:52.632</span>
<span class="t" style="left:551.6px;top:764.11px;font:400 10px/14.0px 'Liberation Mono','DejaVu Sans Mono',monospace;color:#40444f;letter-spacing:-0.001px;">Jul 11, 2024 @</span>
<span class="t" style="left:551.6px;top:778.11px;font:400 10px/14.0px 'Liberation Mono','DejaVu Sans Mono',monospace;color:#40444f;letter-spacing:-0.001px;">17:45:52.000</span>
<span class="t" style="left:719.6px;top:764.11px;font:400 10px/14.0px 'Liberation Mono','DejaVu Sans Mono',monospace;color:#40444f;letter-spacing:-0.003px;">10,034</span>
<span class="t" style="left:837.6px;top:764.11px;font:400 10px/14.0px 'Liberation Mono','DejaVu Sans Mono',monospace;color:#40444f;letter-spacing:-0.008px;">122</span>
<span class="t" style="left:947.2px;top:764.11px;font:400 10px/14.0px 'Liberation Mono','DejaVu Sans Mono',monospace;color:#40444f;letter-spacing:0.000px;">0</span>
<span class="t" style="left:1038.2px;top:764.11px;font:400 10px/14.0px 'Liberation Mono','DejaVu Sans Mono',monospace;color:#40444f;letter-spacing:-0.016px;">34</span>
<span class="t" style="left:1129.2px;top:764.11px;font:400 10px/14.0px 'Liberation Mono','DejaVu Sans Mono',monospace;color:#40444f;letter-spacing:-0.003px;">10,192</span>
<span class="t" style="left:1179px;top:764.11px;font:400 10px/14.0px 'Liberation Mono','DejaVu Sans Mono',monospace;color:#40444f;letter-spacing:-0.001px;">windows-events</span>
<span class="t" style="left:1374px;top:764.11px;font:400 10px/14.0px 'Liberation Mono','DejaVu Sans Mono',monospace;color:#40444f;letter-spacing:-0.001px;">logstash-windows-events-group-soc</span>
</div>
</body>
</html>
